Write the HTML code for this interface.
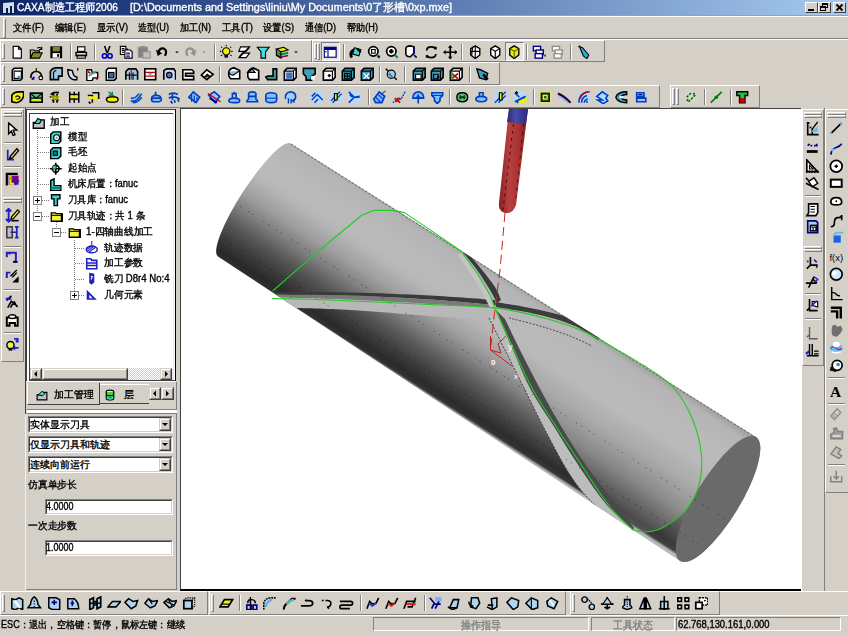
<!DOCTYPE html>
<html><head><meta charset="utf-8"><style>
html,body{margin:0;padding:0}
body{width:848px;height:636px;overflow:hidden;position:relative;background:#d4d0c8;font-family:"Liberation Sans", sans-serif;font-size:12px;color:#000}
div{-webkit-text-stroke:0.35px currentColor}
</style></head><body>
<div style="position:absolute;left:0px;top:0px;width:848px;height:15px;background:linear-gradient(to right,#0a246a 0%,#a6caf0 100%)"></div><div style="position:absolute;left:0px;top:15px;width:848px;height:1px;background:#a0a0a0"></div><svg style="position:absolute;left:2px;top:1px" width="13" height="13" viewBox="0 0 13 13"><rect x="0" y="0" width="13" height="13" fill="#0a1a40"/><path d="M1 2v10h3V7h2v5h2V5h2v7h2V1" fill="#c8e0f0"/></svg><div style="position:absolute;left:17px;top:1px;white-space:nowrap;transform-origin:0 0;transform:scaleX(0.9229);color:#fff;font-size:11px;line-height:13px">CAXA制造工程师2006</div><div style="position:absolute;left:130px;top:1px;white-space:nowrap;transform-origin:0 0;transform:scaleX(0.9882);color:#fff;font-size:11px;line-height:13px">[D:\Documents and Settings\liniu\My Documents\0了形槽\0xp.mxe]</div><div style="position:absolute;left:805px;top:2px;width:13px;height:11px;box-sizing:border-box;background:#d4d0c8;border-top:1px solid #fff;border-left:1px solid #fff;border-right:1px solid #404040;border-bottom:1px solid #404040"></div><div style="position:absolute;left:818px;top:2px;width:13px;height:11px;box-sizing:border-box;background:#d4d0c8;border-top:1px solid #fff;border-left:1px solid #fff;border-right:1px solid #404040;border-bottom:1px solid #404040"></div><div style="position:absolute;left:833px;top:2px;width:13px;height:11px;box-sizing:border-box;background:#d4d0c8;border-top:1px solid #fff;border-left:1px solid #fff;border-right:1px solid #404040;border-bottom:1px solid #404040"></div><svg style="position:absolute;left:805px;top:2px" width="13" height="11"><rect x="3" y="7" width="6" height="2" fill="#000"/></svg><svg style="position:absolute;left:818px;top:2px" width="13" height="11"><rect x="4.5" y="1.5" width="5" height="4" fill="none" stroke="#000"/><rect x="4" y="1" width="6" height="2" fill="#000"/><rect x="2.5" y="4.5" width="5" height="4" fill="#d4d0c8" stroke="#000"/><rect x="2" y="4" width="6" height="2" fill="#000"/></svg><svg style="position:absolute;left:833px;top:2px" width="13" height="11"><path d="M3.5 2.5l6 6M9.5 2.5l-6 6" stroke="#000" stroke-width="1.8"/></svg><div style="position:absolute;left:0px;top:16px;width:848px;height:1px;background:#fff"></div><div style="position:absolute;left:3px;top:18px;width:3px;height:20px;box-sizing:border-box;border-top:1px solid #fff;border-left:1px solid #fff;border-right:1px solid #808080;border-bottom:1px solid #808080"></div><div style="position:absolute;left:13px;top:22px;white-space:nowrap;transform-origin:0 0;transform:scaleX(0.9457);font-size:10px;line-height:12px">文件(F)</div><div style="position:absolute;left:55px;top:22px;white-space:nowrap;transform-origin:0 0;transform:scaleX(0.9297);font-size:10px;line-height:12px">编辑(E)</div><div style="position:absolute;left:97px;top:22px;white-space:nowrap;transform-origin:0 0;transform:scaleX(0.9297);font-size:10px;line-height:12px">显示(V)</div><div style="position:absolute;left:138px;top:22px;white-space:nowrap;transform-origin:0 0;transform:scaleX(0.9147);font-size:10px;line-height:12px">造型(U)</div><div style="position:absolute;left:180px;top:22px;white-space:nowrap;transform-origin:0 0;transform:scaleX(0.9147);font-size:10px;line-height:12px">加工(N)</div><div style="position:absolute;left:222px;top:22px;white-space:nowrap;transform-origin:0 0;transform:scaleX(0.9457);font-size:10px;line-height:12px">工具(T)</div><div style="position:absolute;left:263px;top:22px;white-space:nowrap;transform-origin:0 0;transform:scaleX(0.9297);font-size:10px;line-height:12px">设置(S)</div><div style="position:absolute;left:305px;top:22px;white-space:nowrap;transform-origin:0 0;transform:scaleX(0.9147);font-size:10px;line-height:12px">通信(D)</div><div style="position:absolute;left:347px;top:22px;white-space:nowrap;transform-origin:0 0;transform:scaleX(0.9147);font-size:10px;line-height:12px">帮助(H)</div><div style="position:absolute;left:0px;top:38px;width:848px;height:1px;background:#808080"></div><div style="position:absolute;left:0px;top:39px;width:848px;height:1px;background:#fff"></div><div style="position:absolute;left:0px;top:40px;width:312px;height:22px;box-sizing:border-box;border-top:1px solid #fff;border-left:1px solid #fff;border-right:1px solid #808080;border-bottom:1px solid #808080"></div><div style="position:absolute;left:2px;top:43px;width:3px;height:16px;box-sizing:border-box;border-top:1px solid #fff;border-left:1px solid #fff;border-right:1px solid #808080;border-bottom:1px solid #808080"></div><div style="position:absolute;left:312px;top:40px;width:293px;height:22px;box-sizing:border-box;border-top:1px solid #fff;border-left:1px solid #fff;border-right:1px solid #808080;border-bottom:1px solid #808080"></div><div style="position:absolute;left:314px;top:43px;width:3px;height:16px;box-sizing:border-box;border-top:1px solid #fff;border-left:1px solid #fff;border-right:1px solid #808080;border-bottom:1px solid #808080"></div><div style="position:absolute;left:317px;top:43px;width:3px;height:17px;box-sizing:border-box;border-top:1px solid #fff;border-left:1px solid #fff;border-right:1px solid #808080;border-bottom:1px solid #808080"></div><div style="position:absolute;left:0px;top:62px;width:500px;height:23px;box-sizing:border-box;border-top:1px solid #fff;border-left:1px solid #fff;border-right:1px solid #808080;border-bottom:1px solid #808080"></div><div style="position:absolute;left:2px;top:65px;width:3px;height:17px;box-sizing:border-box;border-top:1px solid #fff;border-left:1px solid #fff;border-right:1px solid #808080;border-bottom:1px solid #808080"></div><div style="position:absolute;left:0px;top:85px;width:660px;height:23px;box-sizing:border-box;border-top:1px solid #fff;border-left:1px solid #fff;border-right:1px solid #808080;border-bottom:1px solid #808080"></div><div style="position:absolute;left:2px;top:88px;width:3px;height:17px;box-sizing:border-box;border-top:1px solid #fff;border-left:1px solid #fff;border-right:1px solid #808080;border-bottom:1px solid #808080"></div><div style="position:absolute;left:670px;top:85px;width:90px;height:23px;box-sizing:border-box;border-top:1px solid #fff;border-left:1px solid #fff;border-right:1px solid #808080;border-bottom:1px solid #808080"></div><div style="position:absolute;left:672px;top:88px;width:3px;height:17px;box-sizing:border-box;border-top:1px solid #fff;border-left:1px solid #fff;border-right:1px solid #808080;border-bottom:1px solid #808080"></div><div style="position:absolute;left:676px;top:88px;width:3px;height:17px;box-sizing:border-box;border-top:1px solid #fff;border-left:1px solid #fff;border-right:1px solid #808080;border-bottom:1px solid #808080"></div><div style="position:absolute;left:25px;top:108px;width:1px;height:306px;background:#404040"></div><div style="position:absolute;left:25px;top:414px;width:1px;height:177px;background:#f0f0f0"></div><div style="position:absolute;left:1px;top:109px;width:23px;height:253px;box-sizing:border-box;border-top:1px solid #fff;border-left:1px solid #fff;border-right:1px solid #808080;border-bottom:1px solid #808080"></div><div style="position:absolute;left:3px;top:111px;width:19px;height:3px;box-sizing:border-box;border-top:1px solid #fff;border-left:1px solid #fff;border-right:1px solid #808080;border-bottom:1px solid #808080"></div><div style="position:absolute;left:3px;top:114px;width:19px;height:3px;box-sizing:border-box;border-top:1px solid #fff;border-left:1px solid #fff;border-right:1px solid #808080;border-bottom:1px solid #808080"></div><div style="position:absolute;left:4px;top:142px;width:17px;height:1px;background:#808080"></div><div style="position:absolute;left:4px;top:143px;width:17px;height:1px;background:#fff"></div><div style="position:absolute;left:4px;top:166px;width:17px;height:1px;background:#808080"></div><div style="position:absolute;left:4px;top:167px;width:17px;height:1px;background:#fff"></div><div style="position:absolute;left:3px;top:197px;width:19px;height:3px;box-sizing:border-box;border-top:1px solid #fff;border-left:1px solid #fff;border-right:1px solid #808080;border-bottom:1px solid #808080"></div><div style="position:absolute;left:3px;top:200px;width:19px;height:3px;box-sizing:border-box;border-top:1px solid #fff;border-left:1px solid #fff;border-right:1px solid #808080;border-bottom:1px solid #808080"></div><div style="position:absolute;left:4px;top:246px;width:17px;height:1px;background:#808080"></div><div style="position:absolute;left:4px;top:247px;width:17px;height:1px;background:#fff"></div><div style="position:absolute;left:4px;top:289px;width:17px;height:1px;background:#808080"></div><div style="position:absolute;left:4px;top:290px;width:17px;height:1px;background:#fff"></div><div style="position:absolute;left:4px;top:332px;width:17px;height:1px;background:#808080"></div><div style="position:absolute;left:4px;top:333px;width:17px;height:1px;background:#fff"></div><div style="position:absolute;left:26px;top:108px;width:154px;height:483px;background:#d4d0c8"></div><div style="position:absolute;left:176px;top:382px;width:1px;height:208px;background:#808080"></div><div style="position:absolute;left:26px;top:589px;width:151px;height:1px;background:#808080"></div><div style="position:absolute;left:26px;top:109px;width:150px;height:273px;background:#fff"></div><div style="position:absolute;left:26px;top:109px;width:150px;height:1px;background:#404040"></div><div style="position:absolute;left:26px;top:109px;width:1px;height:273px;background:#404040"></div><div style="position:absolute;left:175px;top:109px;width:1px;height:273px;background:#000"></div><div style="position:absolute;left:29px;top:113px;width:144px;height:1px;background:#404040"></div><div style="position:absolute;left:29px;top:113px;width:1px;height:268px;background:#404040"></div><div style="position:absolute;left:29px;top:380px;width:146px;height:1px;background:#404040"></div><div style="position:absolute;left:26px;top:381px;width:150px;height:1px;background:#fff"></div><div style="position:absolute;left:173px;top:113px;width:1px;height:267px;background:#e8e8e8"></div><div style="position:absolute;left:30px;top:368px;width:143px;height:12px;background:repeating-conic-gradient(#d4d0c8 0% 25%,#fff 0% 50%) 0 0/2px 2px"></div><div style="position:absolute;left:30px;top:368px;width:12px;height:12px;box-sizing:border-box;background:#d4d0c8;border-top:1px solid #d4d0c8;border-left:1px solid #d4d0c8;border-right:1px solid #404040;border-bottom:1px solid #404040;"></div><div style="position:absolute;left:31px;top:369px;width:10px;height:10px;box-sizing:border-box;border-top:1px solid #fff;border-left:1px solid #fff;border-right:1px solid #808080;border-bottom:1px solid #808080"></div><div style="position:absolute;left:42px;top:368px;width:86px;height:12px;box-sizing:border-box;background:#d4d0c8;border-top:1px solid #d4d0c8;border-left:1px solid #d4d0c8;border-right:1px solid #404040;border-bottom:1px solid #404040;"></div><div style="position:absolute;left:43px;top:369px;width:84px;height:10px;box-sizing:border-box;border-top:1px solid #fff;border-left:1px solid #fff;border-right:1px solid #808080;border-bottom:1px solid #808080"></div><div style="position:absolute;left:160px;top:368px;width:12px;height:12px;box-sizing:border-box;background:#d4d0c8;border-top:1px solid #d4d0c8;border-left:1px solid #d4d0c8;border-right:1px solid #404040;border-bottom:1px solid #404040;"></div><div style="position:absolute;left:161px;top:369px;width:10px;height:10px;box-sizing:border-box;border-top:1px solid #fff;border-left:1px solid #fff;border-right:1px solid #808080;border-bottom:1px solid #808080"></div><svg style="position:absolute;left:30px;top:368px" width="12" height="12"><path d="M4 6l3-3v6z" fill="#000"/></svg><svg style="position:absolute;left:160px;top:368px" width="12" height="12"><path d="M8 6L5 3v6z" fill="#000"/></svg><div style="position:absolute;left:99px;top:384px;width:50px;height:20px;box-sizing:border-box;border-top:1px solid #fff;border-bottom:1px solid #404040"></div><div style="position:absolute;left:27px;top:383px;width:73px;height:22px;box-sizing:border-box;background:#d4d0c8;border-left:1px solid #fff;border-right:1px solid #404040;border-bottom:1px solid #404040"></div><div style="position:absolute;left:54px;top:389px;white-space:nowrap;transform-origin:0 0;transform:scaleX(0.9900);font-size:10px;line-height:12px">加工管理</div><div style="position:absolute;left:123.5px;top:389px;white-space:nowrap;transform-origin:0 0;transform:scaleX(1.0000);font-size:10px;line-height:12px">层</div><div style="position:absolute;left:149px;top:387px;width:12px;height:13px;box-sizing:border-box;background:#d4d0c8;border-top:1px solid #d4d0c8;border-left:1px solid #d4d0c8;border-right:1px solid #404040;border-bottom:1px solid #404040;"></div><div style="position:absolute;left:150px;top:388px;width:10px;height:11px;box-sizing:border-box;border-top:1px solid #fff;border-left:1px solid #fff;border-right:1px solid #808080;border-bottom:1px solid #808080"></div><div style="position:absolute;left:161px;top:387px;width:13px;height:13px;box-sizing:border-box;background:#d4d0c8;border-top:1px solid #d4d0c8;border-left:1px solid #d4d0c8;border-right:1px solid #404040;border-bottom:1px solid #404040;"></div><div style="position:absolute;left:162px;top:388px;width:11px;height:11px;box-sizing:border-box;border-top:1px solid #fff;border-left:1px solid #fff;border-right:1px solid #808080;border-bottom:1px solid #808080"></div><svg style="position:absolute;left:149px;top:387px" width="12" height="13"><path d="M4 6.5l3-3v6z" fill="#000"/></svg><svg style="position:absolute;left:161px;top:387px" width="13" height="13"><path d="M8 6.5L5 3.5v6z" fill="#000"/></svg><div style="position:absolute;left:27px;top:409px;width:150px;height:1px;background:#808080"></div><div style="position:absolute;left:27px;top:410px;width:150px;height:3px;background:#fff"></div><div style="position:absolute;left:27px;top:413px;width:150px;height:1px;background:#808080"></div><div style="position:absolute;left:28px;top:416px;width:145px;height:17px;box-sizing:border-box;background:#fff;border-top:1px solid #808080;border-left:1px solid #808080;border-right:1px solid #fff;border-bottom:1px solid #fff"></div><div style="position:absolute;left:29px;top:417px;width:143px;height:15px;box-sizing:border-box;border-top:1px solid #404040;border-left:1px solid #404040;border-right:1px solid #d4d0c8;border-bottom:1px solid #d4d0c8"></div><div style="position:absolute;left:159px;top:418px;width:12px;height:13px;box-sizing:border-box;background:#d4d0c8;border-top:1px solid #d4d0c8;border-left:1px solid #d4d0c8;border-right:1px solid #404040;border-bottom:1px solid #404040;"></div><div style="position:absolute;left:160px;top:419px;width:10px;height:11px;box-sizing:border-box;border-top:1px solid #fff;border-left:1px solid #fff;border-right:1px solid #808080;border-bottom:1px solid #808080"></div><svg style="position:absolute;left:159px;top:418px" width="12" height="13"><path d="M3 5h6l-3 3z" fill="#000"/></svg><div style="position:absolute;left:30px;top:419px;white-space:nowrap;transform-origin:0 0;transform:scaleX(0.9917);font-size:10px;line-height:12px">实体显示刀具</div><div style="position:absolute;left:28px;top:436px;width:145px;height:17px;box-sizing:border-box;background:#fff;border-top:1px solid #808080;border-left:1px solid #808080;border-right:1px solid #fff;border-bottom:1px solid #fff"></div><div style="position:absolute;left:29px;top:437px;width:143px;height:15px;box-sizing:border-box;border-top:1px solid #404040;border-left:1px solid #404040;border-right:1px solid #d4d0c8;border-bottom:1px solid #d4d0c8"></div><div style="position:absolute;left:159px;top:438px;width:12px;height:13px;box-sizing:border-box;background:#d4d0c8;border-top:1px solid #d4d0c8;border-left:1px solid #d4d0c8;border-right:1px solid #404040;border-bottom:1px solid #404040;"></div><div style="position:absolute;left:160px;top:439px;width:10px;height:11px;box-sizing:border-box;border-top:1px solid #fff;border-left:1px solid #fff;border-right:1px solid #808080;border-bottom:1px solid #808080"></div><svg style="position:absolute;left:159px;top:438px" width="12" height="13"><path d="M3 5h6l-3 3z" fill="#000"/></svg><div style="position:absolute;left:30px;top:439px;white-space:nowrap;transform-origin:0 0;transform:scaleX(1.0000);font-size:10px;line-height:12px">仅显示刀具和轨迹</div><div style="position:absolute;left:28px;top:456px;width:145px;height:17px;box-sizing:border-box;background:#fff;border-top:1px solid #808080;border-left:1px solid #808080;border-right:1px solid #fff;border-bottom:1px solid #fff"></div><div style="position:absolute;left:29px;top:457px;width:143px;height:15px;box-sizing:border-box;border-top:1px solid #404040;border-left:1px solid #404040;border-right:1px solid #d4d0c8;border-bottom:1px solid #d4d0c8"></div><div style="position:absolute;left:159px;top:458px;width:12px;height:13px;box-sizing:border-box;background:#d4d0c8;border-top:1px solid #d4d0c8;border-left:1px solid #d4d0c8;border-right:1px solid #404040;border-bottom:1px solid #404040;"></div><div style="position:absolute;left:160px;top:459px;width:10px;height:11px;box-sizing:border-box;border-top:1px solid #fff;border-left:1px solid #fff;border-right:1px solid #808080;border-bottom:1px solid #808080"></div><svg style="position:absolute;left:159px;top:458px" width="12" height="13"><path d="M3 5h6l-3 3z" fill="#000"/></svg><div style="position:absolute;left:30px;top:459px;white-space:nowrap;transform-origin:0 0;transform:scaleX(1.0000);font-size:10px;line-height:12px">连续向前运行</div><div style="position:absolute;left:28px;top:479px;white-space:nowrap;transform-origin:0 0;transform:scaleX(0.9800);font-size:10px;line-height:12px">仿真单步长</div><div style="position:absolute;left:28px;top:520px;white-space:nowrap;transform-origin:0 0;transform:scaleX(0.9800);font-size:10px;line-height:12px">一次走步数</div><div style="position:absolute;left:45px;top:499px;width:128px;height:16px;box-sizing:border-box;background:#fff;border-top:1px solid #808080;border-left:1px solid #808080;border-right:1px solid #fff;border-bottom:1px solid #fff"></div><div style="position:absolute;left:46px;top:500px;width:126px;height:14px;box-sizing:border-box;border-top:1px solid #404040;border-left:1px solid #404040;border-right:1px solid #d4d0c8;border-bottom:1px solid #d4d0c8"></div><div style="position:absolute;left:46px;top:501px;white-space:nowrap;transform-origin:0 0;transform:scaleX(0.8989);font-size:10px;line-height:12px">4.0000</div><div style="position:absolute;left:45px;top:540px;width:128px;height:16px;box-sizing:border-box;background:#fff;border-top:1px solid #808080;border-left:1px solid #808080;border-right:1px solid #fff;border-bottom:1px solid #fff"></div><div style="position:absolute;left:46px;top:541px;width:126px;height:14px;box-sizing:border-box;border-top:1px solid #404040;border-left:1px solid #404040;border-right:1px solid #d4d0c8;border-bottom:1px solid #d4d0c8"></div><div style="position:absolute;left:46px;top:542px;white-space:nowrap;transform-origin:0 0;transform:scaleX(0.8989);font-size:10px;line-height:12px">1.0000</div><div style="position:absolute;left:180px;top:108px;width:621px;height:483px;box-sizing:border-box;background:#fff;border-top:1px solid #404040;border-left:1px solid #404040;border-bottom:2px solid #000"></div><div style="position:absolute;left:801px;top:108px;width:1px;height:483px;background:#fff"></div><div style="position:absolute;left:802px;top:109px;width:22px;height:257px;box-sizing:border-box;border-top:1px solid #fff;border-left:1px solid #fff;border-right:1px solid #808080;border-bottom:1px solid #808080"></div><div style="position:absolute;left:824px;top:108px;width:1px;height:483px;background:#808080"></div><div style="position:absolute;left:825px;top:109px;width:23px;height:384px;box-sizing:border-box;border-top:1px solid #fff;border-left:1px solid #fff;border-bottom:1px solid #808080"></div><div style="position:absolute;left:804px;top:112px;width:18px;height:3px;box-sizing:border-box;border-top:1px solid #fff;border-left:1px solid #fff;border-right:1px solid #808080;border-bottom:1px solid #808080"></div><div style="position:absolute;left:804px;top:115px;width:18px;height:3px;box-sizing:border-box;border-top:1px solid #fff;border-left:1px solid #fff;border-right:1px solid #808080;border-bottom:1px solid #808080"></div><div style="position:absolute;left:827px;top:112px;width:19px;height:3px;box-sizing:border-box;border-top:1px solid #fff;border-left:1px solid #fff;border-right:1px solid #808080;border-bottom:1px solid #808080"></div><div style="position:absolute;left:827px;top:115px;width:19px;height:3px;box-sizing:border-box;border-top:1px solid #fff;border-left:1px solid #fff;border-right:1px solid #808080;border-bottom:1px solid #808080"></div><div style="position:absolute;left:804px;top:246px;width:18px;height:3px;box-sizing:border-box;border-top:1px solid #fff;border-left:1px solid #fff;border-right:1px solid #808080;border-bottom:1px solid #808080"></div><div style="position:absolute;left:804px;top:249px;width:18px;height:3px;box-sizing:border-box;border-top:1px solid #fff;border-left:1px solid #fff;border-right:1px solid #808080;border-bottom:1px solid #808080"></div><div style="position:absolute;left:805px;top:195px;width:16px;height:1px;background:#808080"></div><div style="position:absolute;left:805px;top:196px;width:16px;height:1px;background:#fff"></div><div style="position:absolute;left:805px;top:293px;width:16px;height:1px;background:#808080"></div><div style="position:absolute;left:805px;top:294px;width:16px;height:1px;background:#fff"></div><div style="position:absolute;left:805px;top:318px;width:16px;height:1px;background:#808080"></div><div style="position:absolute;left:805px;top:319px;width:16px;height:1px;background:#fff"></div><div style="position:absolute;left:828px;top:377px;width:17px;height:1px;background:#808080"></div><div style="position:absolute;left:828px;top:378px;width:17px;height:1px;background:#fff"></div><div style="position:absolute;left:828px;top:403px;width:17px;height:1px;background:#808080"></div><div style="position:absolute;left:828px;top:404px;width:17px;height:1px;background:#fff"></div><div style="position:absolute;left:828px;top:464px;width:17px;height:1px;background:#808080"></div><div style="position:absolute;left:828px;top:465px;width:17px;height:1px;background:#fff"></div><div style="position:absolute;left:0px;top:591px;width:848px;height:1px;background:#fff"></div><div style="position:absolute;left:0px;top:591px;width:208px;height:24px;box-sizing:border-box;border-top:1px solid #fff;border-left:1px solid #fff;border-right:1px solid #808080;border-bottom:1px solid #808080"></div><div style="position:absolute;left:209px;top:591px;width:357px;height:24px;box-sizing:border-box;border-top:1px solid #fff;border-left:1px solid #fff;border-right:1px solid #808080;border-bottom:1px solid #808080"></div><div style="position:absolute;left:2px;top:594px;width:3px;height:18px;box-sizing:border-box;border-top:1px solid #fff;border-left:1px solid #fff;border-right:1px solid #808080;border-bottom:1px solid #808080"></div><div style="position:absolute;left:570px;top:591px;width:150px;height:24px;box-sizing:border-box;border-top:1px solid #fff;border-left:1px solid #fff;border-right:1px solid #808080;border-bottom:1px solid #808080"></div><div style="position:absolute;left:572px;top:594px;width:3px;height:18px;box-sizing:border-box;border-top:1px solid #fff;border-left:1px solid #fff;border-right:1px solid #808080;border-bottom:1px solid #808080"></div><div style="position:absolute;left:0px;top:615px;width:848px;height:1px;background:#fff"></div><div style="position:absolute;left:1px;top:619px;white-space:nowrap;transform-origin:0 0;transform:scaleX(0.9174);font-size:10px;line-height:12px">ESC：退出，空格键：暂停，鼠标左键：继续</div><div style="position:absolute;left:373px;top:617px;width:216px;height:14px;box-sizing:border-box;border-top:1px solid #808080;border-left:1px solid #808080;border-right:1px solid #fff;border-bottom:1px solid #fff"></div><div style="position:absolute;left:461px;top:619px;white-space:nowrap;transform-origin:0 0;transform:scaleX(0.9091);font-size:11px;line-height:12px;color:#808080">操作指导</div><div style="position:absolute;left:591px;top:617px;width:84px;height:14px;box-sizing:border-box;border-top:1px solid #808080;border-left:1px solid #808080;border-right:1px solid #fff;border-bottom:1px solid #fff"></div><div style="position:absolute;left:613px;top:619px;white-space:nowrap;transform-origin:0 0;transform:scaleX(0.9091);font-size:11px;line-height:12px;color:#808080">工具状态</div><div style="position:absolute;left:676px;top:617px;width:165px;height:14px;box-sizing:border-box;border-top:1px solid #808080;border-left:1px solid #808080;border-right:1px solid #fff;border-bottom:1px solid #fff"></div><div style="position:absolute;left:678px;top:619px;white-space:nowrap;transform-origin:0 0;transform:scaleX(0.9411);font-size:10px;line-height:12px">62.768,130.161,0.000</div><div style="position:absolute;left:321px;top:42px;width:19px;height:19px;box-sizing:border-box;background:#e6e4de;border-top:1px solid #808080;border-left:1px solid #808080;border-right:1px solid #fff;border-bottom:1px solid #fff"></div><div style="position:absolute;left:505px;top:42px;width:19px;height:19px;box-sizing:border-box;background:#e6e4de;border-top:1px solid #808080;border-left:1px solid #808080;border-right:1px solid #fff;border-bottom:1px solid #fff"></div><svg style="position:absolute;left:9.8px;top:44.8px" width="14.5" height="14.5" viewBox="0 0 16 16"><g stroke-width="1.25" fill="none"><path d="M3.5 1.5h6l3 3v10h-9z" fill="#fff" stroke="#000"/><path d="M9.5 1.5v3h3" fill="none" stroke="#000"/></g></svg><svg style="position:absolute;left:28.5px;top:44.8px" width="14.5" height="14.5" viewBox="0 0 16 16"><g stroke-width="1.25" fill="none"><path d="M1.5 5.5h4l1 1h5v2h-7l-3 6z" fill="#c8c060" stroke="#000"/><path d="M1.5 14.5l3-6h10l-3 6z" fill="#8a8a20" stroke="#000"/><path d="M9 3.5q3-2 5 1" fill="none" stroke="#000"/><path d="M14 2v3h-3" fill="none" stroke="#000"/></g></svg><svg style="position:absolute;left:48.5px;top:44.8px" width="14.5" height="14.5" viewBox="0 0 16 16"><g stroke-width="1.25" fill="none"><rect x="1.5" y="1.5" width="13" height="13" fill="#000"/><rect x="4" y="2" width="8" height="5" fill="#808040"/><rect x="4" y="9" width="8" height="5" fill="#fff"/><rect x="9" y="10" width="2" height="3" fill="#000"/></g></svg><svg style="position:absolute;left:73.8px;top:44.8px" width="14.5" height="14.5" viewBox="0 0 16 16"><g stroke-width="1.25" fill="none"><rect x="4" y="2" width="8" height="5" fill="#fff" stroke="#000"/><path d="M1.5 7.5h13v5h-13z" fill="#000"/><rect x="3" y="9" width="10" height="1.5" fill="#fff"/><rect x="3.5" y="12" width="9" height="2.5" fill="#fff" stroke="#000"/></g></svg><svg style="position:absolute;left:99.5px;top:44.8px" width="14.5" height="14.5" viewBox="0 0 16 16"><g stroke-width="1.25" fill="none"><path d="M5 1l3 8M11 1L8 9" stroke="#000" stroke-width="1.68"/><circle cx="5" cy="12" r="2.4" fill="none" stroke="#0000c0" stroke-width="1.80"/><circle cx="11" cy="12" r="2.4" fill="none" stroke="#0000c0" stroke-width="1.80"/></g></svg><svg style="position:absolute;left:118.5px;top:44.8px" width="14.5" height="14.5" viewBox="0 0 16 16"><g stroke-width="1.25" fill="none"><path d="M1.5 1.5h6v3h2v6h-8z" fill="#fff" stroke="#000"/><path d="M3 4h3M3 6h3M3 8h3" stroke="#000"/><path d="M6.5 5.5h6l2 2v7h-8z" fill="#fff" stroke="#000"/><path d="M8 9h4M8 11h4M8 13h4" stroke="#000080"/></g></svg><svg style="position:absolute;left:137.2px;top:44.8px" width="14.5" height="14.5" viewBox="0 0 16 16"><g stroke-width="1.25" fill="none"><rect x="1.5" y="2.5" width="10" height="11" fill="#808080" stroke="#909090"/><rect x="6.5" y="7.5" width="8" height="7" fill="#c0c0c0" stroke="#909090"/><rect x="4" y="1" width="5" height="3" fill="#909090"/></g></svg><svg style="position:absolute;left:154.8px;top:44.8px" width="14.5" height="14.5" viewBox="0 0 16 16"><g stroke-width="1.25" fill="none"><path d="M4 8q1-5 6-4q4 2 1 8" fill="none" stroke="#000" stroke-width="2.40"/><path d="M1 5l2 7l5-3z" fill="#000"/></g></svg><svg style="position:absolute;left:183.3px;top:44.8px" width="14.5" height="14.5" viewBox="0 0 16 16"><g stroke-width="1.25" fill="none"><path d="M12 8q-1-5-6-4q-4 2-1 8" fill="none" stroke="#909090" stroke-width="2.40"/><path d="M15 5l-2 7l-5-3z" fill="#909090"/></g></svg><svg style="position:absolute;left:219.2px;top:44.8px" width="14.5" height="14.5" viewBox="0 0 16 16"><g stroke-width="1.25" fill="none"><circle cx="8" cy="7" r="4" fill="#f0f000" stroke="#000"/><rect x="6" y="11" width="4" height="3" fill="#000080"/><path d="M8 0v1.5M1 7h1.5M13.5 7H15M2.5 2l1 1M13.5 2l-1 1M2 12l1.5-1M14 12l-1.5-1" stroke="#000"/></g></svg><svg style="position:absolute;left:237.2px;top:44.8px" width="14.5" height="14.5" viewBox="0 0 16 16"><g stroke-width="1.25" fill="none"><path d="M4 2h10l-4 5h-8z" fill="#fff" stroke="#000"/><path d="M6 9h8l-4 5h-8z" fill="#fff" stroke="#000"/><path d="M13 3l-10 10" stroke="#000" stroke-width="1.80"/></g></svg><svg style="position:absolute;left:256.1px;top:44.8px" width="14.5" height="14.5" viewBox="0 0 16 16"><g stroke-width="1.25" fill="none"><path d="M1.5 2.5h13l-4 5v7h-5v-7z" fill="#40e0e0" stroke="#000"/></g></svg><svg style="position:absolute;left:274.8px;top:44.8px" width="14.5" height="14.5" viewBox="0 0 16 16"><g stroke-width="1.25" fill="none"><path d="M1.5 4.5l8-2 5 3-8 2z" fill="#f0f000" stroke="#000"/><path d="M1.5 7.5l5 3 8-2" fill="none" stroke="#00a000" stroke-width="2.40"/><path d="M1.5 10.5l5 3 8-2" fill="none" stroke="#800080" stroke-width="1.80"/><path d="M1.5 4.5v7l5 3v-7" fill="none" stroke="#000"/></g></svg><svg style="position:absolute;left:348.6px;top:44.8px" width="14.5" height="14.5" viewBox="0 0 16 16"><g stroke-width="1.25" fill="none"><path d="M3 14q-3-6 3-9" fill="none" stroke="#000" stroke-width="3.00"/><path d="M6 3l7 2l-2 7l-7-2z" fill="#40d0d0" stroke="#000"/><path d="M9 4l4 4" stroke="#000" stroke-width="2.40"/></g></svg><svg style="position:absolute;left:367.1px;top:44.8px" width="14.5" height="14.5" viewBox="0 0 16 16"><g stroke-width="1.25" fill="none"><circle cx="7" cy="7" r="5.2" fill="#fff" stroke="#000" stroke-width="1.92"/><rect x="5" y="5" width="4" height="4" fill="none" stroke="#000"/><path d="M11 11l3 3" stroke="#008080" stroke-width="2.40"/><path d="M12 14l2-2" stroke="#000080" stroke-width="1.80"/></g></svg><svg style="position:absolute;left:385.2px;top:44.8px" width="14.5" height="14.5" viewBox="0 0 16 16"><g stroke-width="1.25" fill="none"><circle cx="7" cy="7" r="5.2" fill="#fff" stroke="#000" stroke-width="1.92"/><path d="M4.5 7h5M7 4.5v5" stroke="#000" stroke-width="2.40"/><path d="M11 11l3 3" stroke="#008080" stroke-width="2.40"/></g></svg><svg style="position:absolute;left:404.1px;top:44.8px" width="14.5" height="14.5" viewBox="0 0 16 16"><g stroke-width="1.25" fill="none"><path d="M2 4q0-3 5-3l4 1v7l-4 4q-6 0-5-5z" fill="#fff" stroke="#000" stroke-width="1.80"/><path d="M11 2v8M11 11l3 3" stroke="#000080" stroke-width="1.80"/></g></svg><svg style="position:absolute;left:423.8px;top:44.8px" width="14.5" height="14.5" viewBox="0 0 16 16"><g stroke-width="1.25" fill="none"><path d="M3 6q0-4 5-4q4 0 5 3M13 10q0 4-5 4q-4 0-5-3" fill="none" stroke="#000" stroke-width="1.92"/><path d="M11 2h3v3zM5 14H2v-3z" fill="#000"/></g></svg><svg style="position:absolute;left:442.9px;top:44.8px" width="14.5" height="14.5" viewBox="0 0 16 16"><g stroke-width="1.25" fill="none"><path d="M8 1v14M1 8h14" stroke="#000" stroke-width="1.92"/><path d="M8 0l-2.5 3h5zM8 16l-2.5-3h5zM0 8l3-2.5v5zM16 8l-3-2.5v5z" fill="#000"/></g></svg><svg style="position:absolute;left:468.2px;top:44.8px" width="14.5" height="14.5" viewBox="0 0 16 16"><g stroke-width="1.25" fill="none"><path d="M3 4l5-3l5 3v7l-5 4l-5-4z" fill="#fff" stroke="#000" stroke-width="1.56"/><path d="M3 7h10M8 1v14M5 3l-1 9" stroke="#000"/></g></svg><svg style="position:absolute;left:487.8px;top:44.8px" width="14.5" height="14.5" viewBox="0 0 16 16"><g stroke-width="1.25" fill="none"><path d="M3 4l5-3l5 3v7l-5 4l-5-4z" fill="#fff" stroke="#000" stroke-width="1.56"/><path d="M3 4l5 3l5-3M8 7v8" stroke="#000"/></g></svg><svg style="position:absolute;left:531.6px;top:44.8px" width="14.5" height="14.5" viewBox="0 0 16 16"><g stroke-width="1.25" fill="none"><rect x="1.5" y="1.5" width="8" height="5" fill="#fff" stroke="#000080" stroke-width="1.56"/><rect x="4.5" y="5.5" width="8" height="5" fill="#fff" stroke="#000080" stroke-width="1.56"/><rect x="3.5" y="9.5" width="8" height="5" fill="#fff" stroke="#000080" stroke-width="1.56"/><path d="M13 12l2-2v3z" fill="#000080"/></g></svg><svg style="position:absolute;left:551.2px;top:44.8px" width="14.5" height="14.5" viewBox="0 0 16 16"><g stroke-width="1.25" fill="none"><rect x="1.5" y="1.5" width="8" height="5" fill="#fff" stroke="#909090" stroke-width="1.56"/><rect x="4.5" y="5.5" width="8" height="5" fill="#fff" stroke="#909090" stroke-width="1.56"/><rect x="3.5" y="9.5" width="8" height="5" fill="#fff" stroke="#909090" stroke-width="1.56"/></g></svg><svg style="position:absolute;left:576.5px;top:44.8px" width="14.5" height="14.5" viewBox="0 0 16 16"><g stroke-width="1.25" fill="none"><path d="M3 2l3 1l7 8l-2 4l-4-3l-3-7z" fill="#20b0e0" stroke="#000" stroke-width="1.20"/><path d="M3 2l-1-1" stroke="#000" stroke-width="2.40"/></g></svg><svg style="position:absolute;left:322.9px;top:44.8px" width="14.5" height="14.5" viewBox="0 0 16 16"><g stroke-width="1.25" fill="none"><rect x="1.5" y="2.5" width="13" height="11" fill="#fff" stroke="#000080"/><rect x="1.5" y="2.5" width="13" height="3" fill="#000080"/><path d="M5.5 5.5v8" stroke="#000080"/><rect x="2" y="7" width="2" height="1" fill="#000080"/></g></svg><svg style="position:absolute;left:507.0px;top:44.8px" width="14.5" height="14.5" viewBox="0 0 16 16"><g stroke-width="1.25" fill="none"><path d="M3 4l5-3l5 3v7l-5 4l-5-4z" fill="#f0f000" stroke="#000" stroke-width="1.56"/><path d="M3 4l5 3l5-3M8 7v8" stroke="#606000"/></g></svg><svg style="position:absolute;left:171.6px;top:47.0px" width="10" height="10" viewBox="0 0 16 16"><g stroke-width="1.25" fill="none"><path d="M5 7h6l-3 3z" fill="#000"/></g></svg><svg style="position:absolute;left:198.8px;top:47.0px" width="10" height="10" viewBox="0 0 16 16"><g stroke-width="1.25" fill="none"><path d="M5 7h6l-3 3z" fill="#909090"/></g></svg><svg style="position:absolute;left:291.0px;top:47.0px" width="10" height="10" viewBox="0 0 16 16"><g stroke-width="1.25" fill="none"><path d="M5 7h6l-3 3z" fill="#000"/></g></svg><div style="position:absolute;left:70px;top:44px;width:1px;height:16px;background:#808080"></div><div style="position:absolute;left:71px;top:44px;width:1px;height:16px;background:#fff"></div><div style="position:absolute;left:94px;top:44px;width:1px;height:16px;background:#808080"></div><div style="position:absolute;left:95px;top:44px;width:1px;height:16px;background:#fff"></div><div style="position:absolute;left:214px;top:44px;width:1px;height:16px;background:#808080"></div><div style="position:absolute;left:215px;top:44px;width:1px;height:16px;background:#fff"></div><div style="position:absolute;left:343px;top:44px;width:1px;height:16px;background:#808080"></div><div style="position:absolute;left:344px;top:44px;width:1px;height:16px;background:#fff"></div><div style="position:absolute;left:461px;top:44px;width:1px;height:16px;background:#808080"></div><div style="position:absolute;left:462px;top:44px;width:1px;height:16px;background:#fff"></div><div style="position:absolute;left:526px;top:44px;width:1px;height:16px;background:#808080"></div><div style="position:absolute;left:527px;top:44px;width:1px;height:16px;background:#fff"></div><div style="position:absolute;left:570px;top:44px;width:1px;height:16px;background:#808080"></div><div style="position:absolute;left:571px;top:44px;width:1px;height:16px;background:#fff"></div><svg style="position:absolute;left:9.8px;top:66.8px" width="14.5" height="14.5" viewBox="0 0 16 16"><g stroke-width="1.25" fill="none"><path d="M2.5 3.5l2-2h9v11l-2 2h-9z" fill="#fff" stroke="#000" stroke-width="1.68"/><path d="M4.5 4.5h8v8h-8z" fill="#fff" stroke="#000"/><path d="M9 10l3 3" stroke="#40a0a0" stroke-width="2.40"/></g></svg><svg style="position:absolute;left:28.5px;top:66.8px" width="14.5" height="14.5" viewBox="0 0 16 16"><g stroke-width="1.25" fill="none"><path d="M8 1v4" stroke="#000"/><path d="M2 12q0-7 6-7q6 0 6 7" fill="none" stroke="#000" stroke-width="1.80"/><circle cx="13" cy="12" r="2" fill="#fff" stroke="#000"/><path d="M3 14l3-3M5 14v-3" stroke="#0000c0" stroke-width="1.80"/></g></svg><svg style="position:absolute;left:48.5px;top:66.8px" width="14.5" height="14.5" viewBox="0 0 16 16"><g stroke-width="1.25" fill="none"><path d="M1.5 14V5q2-4 7-4h6v9h-4v4z" fill="#a0c8e0" stroke="#000" stroke-width="1.80"/><path d="M5 14V6q1-2 3-2" fill="none" stroke="#000"/></g></svg><svg style="position:absolute;left:66.3px;top:66.8px" width="14.5" height="14.5" viewBox="0 0 16 16"><g stroke-width="1.25" fill="none"><path d="M2 3q0 9 6 11h4v-3q-4 0-5-7z" fill="#d0e0f0" stroke="#000" stroke-width="1.56"/><path d="M13 1v3" stroke="#000"/></g></svg><svg style="position:absolute;left:85.2px;top:66.8px" width="14.5" height="14.5" viewBox="0 0 16 16"><g stroke-width="1.25" fill="none"><path d="M2 3h5l1 3h6v6h-5l-1 3h-6z" fill="#fff" stroke="#000" stroke-width="1.56"/><path d="M3 5l3 2M12 12l2 2" stroke="#c00000" stroke-width="1.80"/><path d="M4 10l8-5" stroke="#40a0a0" stroke-width="1.80"/></g></svg><svg style="position:absolute;left:104.0px;top:66.8px" width="14.5" height="14.5" viewBox="0 0 16 16"><g stroke-width="1.25" fill="none"><path d="M2.5 3.5l2-2h9v11l-2 2h-9z" fill="#fff" stroke="#000" stroke-width="1.68"/><rect x="5" y="6" width="6" height="6" fill="#4060c0" stroke="#000"/></g></svg><svg style="position:absolute;left:124.1px;top:66.8px" width="14.5" height="14.5" viewBox="0 0 16 16"><g stroke-width="1.25" fill="none"><path d="M2 14V5l3-3h8l2 3v9" fill="#a0c8e0" stroke="#000" stroke-width="1.80"/><path d="M6 14V6M10 14V6M2 9h12" stroke="#000"/><path d="M8 2v12" stroke="#c00000"/></g></svg><svg style="position:absolute;left:142.9px;top:66.8px" width="14.5" height="14.5" viewBox="0 0 16 16"><g stroke-width="1.25" fill="none"><rect x="2" y="2" width="12" height="12" fill="#fff" stroke="#000" stroke-width="1.80"/><path d="M2 6h12M2 10h12" stroke="#c00000"/><path d="M5 7h6l-3 2z" fill="#40a0a0"/></g></svg><svg style="position:absolute;left:161.8px;top:66.8px" width="14.5" height="14.5" viewBox="0 0 16 16"><g stroke-width="1.25" fill="none"><path d="M2 14V4l3-2h8l2 3v9" fill="#c8d8f0" stroke="#000" stroke-width="1.80"/><circle cx="8" cy="9" r="3" fill="#6070c0" stroke="#000"/></g></svg><svg style="position:absolute;left:180.8px;top:66.8px" width="14.5" height="14.5" viewBox="0 0 16 16"><g stroke-width="1.25" fill="none"><path d="M2 3h10l2 2v2H5v3h9v4H2z" fill="#fff" stroke="#000" stroke-width="1.80"/></g></svg><svg style="position:absolute;left:200.2px;top:66.8px" width="14.5" height="14.5" viewBox="0 0 16 16"><g stroke-width="1.25" fill="none"><path d="M1.5 9l6-6l7 5l-7 6z" fill="#fff" stroke="#000" stroke-width="1.80"/><path d="M4 12l4-4l4 3" fill="#303030" stroke="#000"/></g></svg><svg style="position:absolute;left:227.4px;top:66.8px" width="14.5" height="14.5" viewBox="0 0 16 16"><g stroke-width="1.25" fill="none"><path d="M2 5q2-4 6-4l6 3v9h-10l-2-3z" fill="#fff" stroke="#000" stroke-width="1.80"/><path d="M2 5q1 4 5 4l7-5" fill="#80c0e0" stroke="#000"/></g></svg><svg style="position:absolute;left:245.6px;top:66.8px" width="14.5" height="14.5" viewBox="0 0 16 16"><g stroke-width="1.25" fill="none"><path d="M2 6q2-4 6-5l6 3v10h-10l-2-3z" fill="#fff" stroke="#000" stroke-width="1.80"/><path d="M2 6l5-4l3 4z" fill="#80c0e0" stroke="#000"/></g></svg><svg style="position:absolute;left:263.8px;top:66.8px" width="14.5" height="14.5" viewBox="0 0 16 16"><g stroke-width="1.25" fill="none"><path d="M2 11l2 3h10V2h-4v8H4z" fill="#40a0a0" stroke="#000" stroke-width="1.80"/></g></svg><svg style="position:absolute;left:282.8px;top:66.8px" width="14.5" height="14.5" viewBox="0 0 16 16"><g stroke-width="1.25" fill="none"><path d="M1.5 4.5l3-3h10v10l-3 3h-10z" fill="#fff" stroke="#000" stroke-width="1.80"/><path d="M1.5 4.5h10v10M11.5 4.5l3-3" fill="none" stroke="#000"/><rect x="3.5" y="6" width="7" height="7" fill="#4070c0"/></g></svg><svg style="position:absolute;left:302.1px;top:66.8px" width="14.5" height="14.5" viewBox="0 0 16 16"><g stroke-width="1.25" fill="none"><path d="M1.5 1.5h13v6l-4 3v4h-6v-4l-3-3z" fill="#40a0c0" stroke="#000" stroke-width="1.80"/><rect x="10" y="10" width="4" height="4" fill="#fff"/></g></svg><svg style="position:absolute;left:322.1px;top:66.8px" width="14.5" height="14.5" viewBox="0 0 16 16"><g stroke-width="1.25" fill="none"><path d="M1.5 4.5l3-3h10v10l-3 3h-10z" fill="#fff" stroke="#000" stroke-width="1.80"/><path d="M1.5 4.5h10v10M11.5 4.5l3-3" fill="none" stroke="#000"/><path d="M6 9.5l2-2l2 2l-2 2z" fill="#000"/></g></svg><svg style="position:absolute;left:341.1px;top:66.8px" width="14.5" height="14.5" viewBox="0 0 16 16"><g stroke-width="1.25" fill="none"><path d="M1.5 4.5l3-3h10v10l-3 3h-10z" fill="#40a0c0" stroke="#000" stroke-width="1.80"/><path d="M1.5 4.5h10v10M11.5 4.5l3-3" fill="none" stroke="#000"/><path d="M4 7h6v6h-6zM7 7v6M4 10h6" stroke="#000" fill="none"/></g></svg><svg style="position:absolute;left:359.9px;top:66.8px" width="14.5" height="14.5" viewBox="0 0 16 16"><g stroke-width="1.25" fill="none"><path d="M1.5 4.5l3-3h10v10l-3 3h-10z" fill="#40a0c0" stroke="#000" stroke-width="1.80"/><path d="M1.5 4.5h10v10M11.5 4.5l3-3" fill="none" stroke="#000"/><path d="M4 7l6 6M10 7l-6 6" stroke="#fff" stroke-width="1.44"/></g></svg><svg style="position:absolute;left:384.4px;top:66.8px" width="14.5" height="14.5" viewBox="0 0 16 16"><g stroke-width="1.25" fill="none"><path d="M2 2l12 12" stroke="#000" stroke-width="1.68"/><circle cx="8" cy="8" r="4.5" fill="#a0d0e0" stroke="#000"/><path d="M5 7l4 4" stroke="#4080a0" stroke-width="2.40"/></g></svg><svg style="position:absolute;left:411.6px;top:66.8px" width="14.5" height="14.5" viewBox="0 0 16 16"><g stroke-width="1.25" fill="none"><path d="M1.5 4.5l3-3h10v10l-3 3h-10z" fill="#40a0c0" stroke="#000" stroke-width="1.80"/><path d="M1.5 4.5h10v10M11.5 4.5l3-3" fill="none" stroke="#000"/><path d="M4 8h6v5h-6z" fill="#fff" stroke="#000"/></g></svg><svg style="position:absolute;left:430.4px;top:66.8px" width="14.5" height="14.5" viewBox="0 0 16 16"><g stroke-width="1.25" fill="none"><path d="M1.5 4.5l3-3h10v10l-3 3h-10z" fill="#40a0c0" stroke="#000" stroke-width="1.80"/><path d="M1.5 4.5h10v10M11.5 4.5l3-3" fill="none" stroke="#000"/><path d="M4 8h5v5h-5z" fill="#40a0c0" stroke="#000"/><path d="M8 9l3 2l-3 2z" fill="#000"/></g></svg><svg style="position:absolute;left:449.4px;top:66.8px" width="14.5" height="14.5" viewBox="0 0 16 16"><g stroke-width="1.25" fill="none"><path d="M1.5 4.5l3-3h10v10l-3 3h-10z" fill="#fff" stroke="#000" stroke-width="1.80"/><path d="M1.5 4.5h10v10M11.5 4.5l3-3" fill="none" stroke="#000"/><path d="M3 7l7 6M3 13l7-6" stroke="#c00000" stroke-width="1.80"/><rect x="2" y="5" width="2" height="9" fill="#40a040"/></g></svg><svg style="position:absolute;left:475.1px;top:66.8px" width="14.5" height="14.5" viewBox="0 0 16 16"><g stroke-width="1.25" fill="none"><path d="M2 2l4 1l8 4l-2 7l-7-2z" fill="#40a0c0" stroke="#000" stroke-width="1.56"/><path d="M9 8l5 6" stroke="#000" stroke-width="3.00"/></g></svg><div style="position:absolute;left:219px;top:66px;width:1px;height:16px;background:#808080"></div><div style="position:absolute;left:220px;top:66px;width:1px;height:16px;background:#fff"></div><div style="position:absolute;left:379px;top:66px;width:1px;height:16px;background:#808080"></div><div style="position:absolute;left:380px;top:66px;width:1px;height:16px;background:#fff"></div><div style="position:absolute;left:404px;top:66px;width:1px;height:16px;background:#808080"></div><div style="position:absolute;left:405px;top:66px;width:1px;height:16px;background:#fff"></div><div style="position:absolute;left:469px;top:66px;width:1px;height:16px;background:#808080"></div><div style="position:absolute;left:470px;top:66px;width:1px;height:16px;background:#fff"></div><svg style="position:absolute;left:9.8px;top:89.8px" width="14.5" height="14.5" viewBox="0 0 16 16"><g stroke-width="1.25" fill="none"><path d="M2 6q2-4 8-4h5v5q-2 6-8 7l-5-1z" fill="#f0f000" stroke="#000" stroke-width="1.80"/><path d="M6 8q2-3 5 0q-1 3-4 2" fill="none" stroke="#000"/></g></svg><svg style="position:absolute;left:28.5px;top:89.8px" width="14.5" height="14.5" viewBox="0 0 16 16"><g stroke-width="1.25" fill="none"><path d="M1.5 3.5h13v10h-13z" fill="#60c080" stroke="#000" stroke-width="1.80"/><path d="M2 4l6 5l6-5M2 9h12" fill="none" stroke="#000"/><rect x="3" y="10" width="10" height="2" fill="#f0f000"/></g></svg><svg style="position:absolute;left:47.5px;top:89.8px" width="14.5" height="14.5" viewBox="0 0 16 16"><g stroke-width="1.25" fill="none"><path d="M3 5q3-3 9-2M2 8q5-2 10 0M4 11q4-2 8 0M6 4v10M10 4v10" fill="none" stroke="#000" stroke-width="1.92"/><path d="M3 6h10v5H3z" fill="#f0f000" opacity=".6"/></g></svg><svg style="position:absolute;left:67.0px;top:89.8px" width="14.5" height="14.5" viewBox="0 0 16 16"><g stroke-width="1.25" fill="none"><path d="M3 2v12M8 2v12M13 2v12M3 5h10M3 10h10" stroke="#000" stroke-width="1.68"/><rect x="4" y="6" width="8" height="3" fill="#f0f000"/></g></svg><svg style="position:absolute;left:86.0px;top:89.8px" width="14.5" height="14.5" viewBox="0 0 16 16"><g stroke-width="1.25" fill="none"><path d="M2 6h5v8M7 3h7v6h-4" fill="none" stroke="#000" stroke-width="1.68"/><rect x="3" y="7" width="10" height="3" fill="#f0f000"/><path d="M3 13l2 2" stroke="#000" stroke-width="1.80"/></g></svg><svg style="position:absolute;left:104.8px;top:89.8px" width="14.5" height="14.5" viewBox="0 0 16 16"><g stroke-width="1.25" fill="none"><path d="M1.5 10.5q0-3 7-3q6 0 6 3q0 3-6 3q-7 0-7-3z" fill="#f0f000" stroke="#000" stroke-width="1.56"/><path d="M4 2l3 3M8 2v5M4 6h6" stroke="#008080" stroke-width="1.56"/></g></svg><svg style="position:absolute;left:128.6px;top:89.8px" width="14.5" height="14.5" viewBox="0 0 16 16"><g stroke-width="1.25" fill="none"><path d="M2 12q6 2 12-8M2 9q5 1 9-5M4 14q6 0 10-6" fill="none" stroke="#0050d0" stroke-width="1.92"/></g></svg><svg style="position:absolute;left:148.6px;top:89.8px" width="14.5" height="14.5" viewBox="0 0 16 16"><g stroke-width="1.25" fill="none"><path d="M8 2q-2 2 0 4M3 9h10q2 3-2 4h-6q-3-1-2-4z" fill="#80c0ff" stroke="#0040c0" stroke-width="1.80"/><path d="M3 9q0-3 5-3q5 0 5 3" fill="none" stroke="#0040c0" stroke-width="1.80"/></g></svg><svg style="position:absolute;left:167.4px;top:89.8px" width="14.5" height="14.5" viewBox="0 0 16 16"><g stroke-width="1.25" fill="none"><path d="M2 5q4-3 10 0M2 9q5-3 12 1M4 12l2 3M8 11l1 3M12 10l1 3M6 3v8" fill="none" stroke="#0040c0" stroke-width="1.92"/></g></svg><svg style="position:absolute;left:187.1px;top:89.8px" width="14.5" height="14.5" viewBox="0 0 16 16"><g stroke-width="1.25" fill="none"><path d="M2 8l5-6l7 6l-4 6z" fill="#80b0ff" stroke="#0040c0" stroke-width="1.80"/><path d="M5 5v8M8 6v8M11 8v5" stroke="#0040c0"/></g></svg><svg style="position:absolute;left:207.1px;top:89.8px" width="14.5" height="14.5" viewBox="0 0 16 16"><g stroke-width="1.25" fill="none"><path d="M2 6l6-4l6 5l-5 7z" fill="#a0c0ff" stroke="#0040c0" stroke-width="1.80"/><path d="M1 4l14 9" stroke="#c00000" stroke-width="1.44"/><path d="M3 9l8 5" stroke="#000080" stroke-width="2.40"/></g></svg><svg style="position:absolute;left:226.8px;top:89.8px" width="14.5" height="14.5" viewBox="0 0 16 16"><g stroke-width="1.25" fill="none"><path d="M2 12q0-3 6-3q6 0 6 3q0 2-6 2q-6 0-6-2z" fill="#80c0ff" stroke="#0040c0" stroke-width="1.80"/><path d="M6 9V4h4v5M8 2v2M5 4h6" fill="none" stroke="#0040c0" stroke-width="1.80"/></g></svg><svg style="position:absolute;left:244.8px;top:89.8px" width="14.5" height="14.5" viewBox="0 0 16 16"><g stroke-width="1.25" fill="none"><ellipse cx="8" cy="4" rx="4" ry="2" fill="#80c0ff" stroke="#0040c0" stroke-width="1.80"/><path d="M4 4v6q-2 1-2 3h12q0-2-2-3V4M4 7h8" fill="#80c0ff" stroke="#0040c0" stroke-width="1.80"/></g></svg><svg style="position:absolute;left:264.4px;top:89.8px" width="14.5" height="14.5" viewBox="0 0 16 16"><g stroke-width="1.25" fill="none"><path d="M2 6q0-3 6-3q6 0 6 3v5q0 3-6 3q-6 0-6-3z" fill="#80c0ff" stroke="#0040c0" stroke-width="1.80"/><path d="M2 9h12" stroke="#0040c0"/></g></svg><svg style="position:absolute;left:283.4px;top:89.8px" width="14.5" height="14.5" viewBox="0 0 16 16"><g stroke-width="1.25" fill="none"><path d="M3 10q-2-6 5-8q6 0 6 6q-1 4-4 4" fill="#a0d0ff" stroke="#0040c0" stroke-width="1.80"/><path d="M6 9v6M9 10v5M12 10v4" stroke="#0040c0" stroke-width="1.56"/></g></svg><svg style="position:absolute;left:309.8px;top:89.8px" width="14.5" height="14.5" viewBox="0 0 16 16"><g stroke-width="1.25" fill="none"><circle cx="8" cy="8" r="7.5" fill="#b8d8f8"/><path d="M2 7l4-4M2 11l6-6l6 6M5 14l4-4" fill="none" stroke="#0040c0" stroke-width="1.68"/></g></svg><svg style="position:absolute;left:328.6px;top:89.8px" width="14.5" height="14.5" viewBox="0 0 16 16"><g stroke-width="1.25" fill="none"><circle cx="8" cy="8" r="7.5" fill="#b8d8f8"/><path d="M2 12l10-10M4 14l10-10" stroke="#0040c0" stroke-width="1.56"/><rect x="6" y="4" width="3" height="7" fill="#f0f000" stroke="#000"/></g></svg><svg style="position:absolute;left:347.4px;top:89.8px" width="14.5" height="14.5" viewBox="0 0 16 16"><g stroke-width="1.25" fill="none"><circle cx="8" cy="8" r="7.5" fill="#b8d8f8"/><path d="M2 2l6 6l6-1M2 14l6-6M8 8h6M3 5l3 3" fill="none" stroke="#0040c0" stroke-width="1.80"/></g></svg><svg style="position:absolute;left:371.9px;top:89.8px" width="14.5" height="14.5" viewBox="0 0 16 16"><g stroke-width="1.25" fill="none"><path d="M2 10l6-8l6 5l-3 7h-7z" fill="#80b0ff" stroke="#0040c0" stroke-width="1.80"/><path d="M11 4l4-3M4 8l6 6M7 5l5 5" stroke="#0040c0"/></g></svg><svg style="position:absolute;left:391.6px;top:89.8px" width="14.5" height="14.5" viewBox="0 0 16 16"><g stroke-width="1.25" fill="none"><path d="M1 14l6-5l3 1l5-9" fill="none" stroke="#0040c0" stroke-width="1.56" stroke-dasharray="2 1"/><path d="M3 9l6 5M4 13l5-4" stroke="#d00000" stroke-width="1.92"/></g></svg><svg style="position:absolute;left:410.8px;top:89.8px" width="14.5" height="14.5" viewBox="0 0 16 16"><g stroke-width="1.25" fill="none"><path d="M2 9q0-6 6-7q6 1 6 7z" fill="#80c0ff" stroke="#0040c0" stroke-width="1.80"/><path d="M8 5v10M5 9q3-3 6 0" fill="none" stroke="#0040c0" stroke-width="1.80"/></g></svg><svg style="position:absolute;left:429.8px;top:89.8px" width="14.5" height="14.5" viewBox="0 0 16 16"><g stroke-width="1.25" fill="none"><path d="M2 3h12v3l-3 3v3l-3 3l-3-3v-3l-3-3z" fill="#80c0ff" stroke="#0040c0" stroke-width="1.80"/><path d="M2 6h12" stroke="#0040c0"/></g></svg><svg style="position:absolute;left:455.1px;top:89.8px" width="14.5" height="14.5" viewBox="0 0 16 16"><g stroke-width="1.25" fill="none"><path d="M2 8q0-5 6-5q6 0 6 5q0 5-6 5q-6 0-6-5z" fill="#60c080" stroke="#000" stroke-width="1.56"/><path d="M4 8h8M5 6l6 4M5 10l6-4" stroke="#004000"/></g></svg><svg style="position:absolute;left:473.8px;top:89.8px" width="14.5" height="14.5" viewBox="0 0 16 16"><g stroke-width="1.25" fill="none"><path d="M2 10q0-3 6-3q6 0 6 3q0 3-6 3q-6 0-6-3z" fill="#80c0ff" stroke="#0040c0" stroke-width="1.80"/><path d="M6 7V3h4v4" fill="none" stroke="#0040c0" stroke-width="1.80"/></g></svg><svg style="position:absolute;left:492.8px;top:89.8px" width="14.5" height="14.5" viewBox="0 0 16 16"><g stroke-width="1.25" fill="none"><circle cx="8" cy="8" r="7.5" fill="#b8d8f8"/><path d="M2 14l12-12M6 14l8-8" stroke="#0040c0" stroke-width="1.56"/><path d="M7 3h3v8h-3z" fill="#f0f000" stroke="#000"/></g></svg><svg style="position:absolute;left:512.8px;top:89.8px" width="14.5" height="14.5" viewBox="0 0 16 16"><g stroke-width="1.25" fill="none"><circle cx="8" cy="8" r="7.5" fill="#b8d8f8"/><path d="M2 3l5 5M2 13l12-6M4 14l10-5" stroke="#0040c0" stroke-width="1.80"/><path d="M6 12l9-4v6H6z" fill="#f0f000"/><path d="M3 2l2 2" stroke="#000" stroke-width="2.40"/></g></svg><svg style="position:absolute;left:538.0px;top:89.8px" width="14.5" height="14.5" viewBox="0 0 16 16"><g stroke-width="1.25" fill="none"><rect x="2" y="2" width="12" height="12" fill="#f0f040"/><rect x="3.5" y="3.5" width="9" height="9" fill="#306030" stroke="#000"/><rect x="6" y="6" width="4" height="4" fill="none" stroke="#f0f040"/></g></svg><svg style="position:absolute;left:557.0px;top:89.8px" width="14.5" height="14.5" viewBox="0 0 16 16"><g stroke-width="1.25" fill="none"><path d="M1 4q6 2 14 10" fill="none" stroke="#300040" stroke-width="2.40"/><path d="M2 7q5 2 10 7" fill="none" stroke="#80c0ff" stroke-width="1.44"/></g></svg><svg style="position:absolute;left:576.5px;top:89.8px" width="14.5" height="14.5" viewBox="0 0 16 16"><g stroke-width="1.25" fill="none"><circle cx="8" cy="8" r="7.5" fill="#b8d8f8"/><path d="M2 14q0-10 10-12M5 14q0-6 6-8M8 14q0-3 4-4M11 14v-2" fill="none" stroke="#0040c0" stroke-width="1.80"/><path d="M3 10q3-8 11-8" fill="none" stroke="#d00000" stroke-width="1.56"/></g></svg><svg style="position:absolute;left:595.4px;top:89.8px" width="14.5" height="14.5" viewBox="0 0 16 16"><g stroke-width="1.25" fill="none"><circle cx="8" cy="8" r="7.5" fill="#b8d8f8"/><path d="M2 7l6-5l6 4l-2 3l2 3l-5 3l-6-4h5l-3-2z" fill="none" stroke="#0040c0" stroke-width="1.80"/></g></svg><svg style="position:absolute;left:614.2px;top:89.8px" width="14.5" height="14.5" viewBox="0 0 16 16"><g stroke-width="1.25" fill="none"><path d="M14 2q-10 0-12 6q2 6 12 6v-3q-5 0-6-3q1-3 6-3z" fill="#40a0c0" stroke="#000" stroke-width="1.56"/><path d="M6 8h4" stroke="#fff" stroke-width="2.40"/></g></svg><svg style="position:absolute;left:633.8px;top:89.8px" width="14.5" height="14.5" viewBox="0 0 16 16"><g stroke-width="1.25" fill="none"><path d="M3 3h8v4h-8zM3 9h10v4H3z" fill="#a0c0ff" stroke="#0040c0" stroke-width="1.80"/><path d="M5 5h4" stroke="#000080"/></g></svg><svg style="position:absolute;left:684.2px;top:89.8px" width="14.5" height="14.5" viewBox="0 0 16 16"><g stroke-width="1.25" fill="none"><circle cx="8" cy="8" r="7" fill="#c8e8c8" opacity="0.6"/><path d="M3 8l5-5M5 13l8-8M10 5l2-2M3 12l2-2" stroke="#105010" stroke-width="1.68" stroke-dasharray="2.5 1.5"/></g></svg><svg style="position:absolute;left:709.0px;top:89.8px" width="14.5" height="14.5" viewBox="0 0 16 16"><g stroke-width="1.25" fill="none"><path d="M2 14l12-12" stroke="#008000" stroke-width="1.80"/><circle cx="8" cy="8" r="2" fill="#008000"/></g></svg><svg style="position:absolute;left:734.8px;top:89.8px" width="14.5" height="14.5" viewBox="0 0 16 16"><g stroke-width="1.25" fill="none"><path d="M2 2h12v4h-3v8h-6v-8h-3z" fill="#20c040" stroke="#000" stroke-width="1.56"/><rect x="5.5" y="9" width="5" height="5" fill="#d00000"/></g></svg><div style="position:absolute;left:122px;top:89px;width:1px;height:16px;background:#808080"></div><div style="position:absolute;left:123px;top:89px;width:1px;height:16px;background:#fff"></div><div style="position:absolute;left:368px;top:89px;width:1px;height:16px;background:#808080"></div><div style="position:absolute;left:369px;top:89px;width:1px;height:16px;background:#fff"></div><div style="position:absolute;left:449px;top:89px;width:1px;height:16px;background:#808080"></div><div style="position:absolute;left:450px;top:89px;width:1px;height:16px;background:#fff"></div><div style="position:absolute;left:533px;top:89px;width:1px;height:16px;background:#808080"></div><div style="position:absolute;left:534px;top:89px;width:1px;height:16px;background:#fff"></div><div style="position:absolute;left:704px;top:89px;width:1px;height:16px;background:#808080"></div><div style="position:absolute;left:705px;top:89px;width:1px;height:16px;background:#fff"></div><div style="position:absolute;left:730px;top:89px;width:1px;height:16px;background:#808080"></div><div style="position:absolute;left:731px;top:89px;width:1px;height:16px;background:#fff"></div><svg style="position:absolute;left:5.2px;top:121.8px" width="14.5" height="14.5" viewBox="0 0 16 16"><g stroke-width="1.25" fill="none"><path d="M4 1v12l3-3l2 5l2-1l-2-5h4z" fill="#fff" stroke="#000" stroke-width="1.56"/></g></svg><svg style="position:absolute;left:5.2px;top:146.8px" width="14.5" height="14.5" viewBox="0 0 16 16"><g stroke-width="1.25" fill="none"><path d="M3 3v11h7" fill="none" stroke="#2020c0" stroke-width="1.92"/><path d="M13 2l2 2l-7 8l-3 1l1-3z" fill="#f0e060" stroke="#000" stroke-width="1.56"/></g></svg><svg style="position:absolute;left:5.2px;top:172.3px" width="14.5" height="14.5" viewBox="0 0 16 16"><g stroke-width="1.25" fill="none"><path d="M2 15V2h12" fill="none" stroke="#000" stroke-width="2.40"/><rect x="4" y="4" width="11" height="10" fill="#800080"/><path d="M6 4v9h4" fill="none" stroke="#f0f000" stroke-width="2.40"/><path d="M5 7h3" stroke="#40c040" stroke-width="2.40"/><path d="M10 10l2 3l3-4" fill="none" stroke="#2020c0" stroke-width="2.40"/></g></svg><svg style="position:absolute;left:5.2px;top:208.2px" width="14.5" height="14.5" viewBox="0 0 16 16"><g stroke-width="1.25" fill="none"><path d="M4 1v14M1 4l3-3l3 3M1 12l3 3l3-3" fill="none" stroke="#2020c0" stroke-width="2.16"/><path d="M14 2l2 2l-7 8h-2v-2z" fill="#f0f000" stroke="#000"/><path d="M7 14h8" stroke="#000" stroke-width="1.80"/></g></svg><svg style="position:absolute;left:5.2px;top:224.8px" width="14.5" height="14.5" viewBox="0 0 16 16"><g stroke-width="1.25" fill="none"><rect x="2" y="2" width="6" height="12" fill="#c0c0c0" stroke="#404040" stroke-width="1.80"/><path d="M6 8h8M11 2h4M11 14h4M13 2v12" stroke="#2020c0" stroke-width="1.92"/></g></svg><svg style="position:absolute;left:5.2px;top:250.2px" width="14.5" height="14.5" viewBox="0 0 16 16"><g stroke-width="1.25" fill="none"><path d="M2 8V3h3M5 2v3M5 3h7v4M12 7v6h-3" fill="none" stroke="#2020c0" stroke-width="2.16"/><path d="M9 13h5" stroke="#000" stroke-width="1.80"/></g></svg><svg style="position:absolute;left:5.2px;top:268.9px" width="14.5" height="14.5" viewBox="0 0 16 16"><g stroke-width="1.25" fill="none"><path d="M2 10V4h4" fill="none" stroke="#2020c0" stroke-width="2.16"/><path d="M6 8l7-7M8 9l5-5" stroke="#000" stroke-width="1.56"/><path d="M15 8v7H8z" fill="#000"/></g></svg><svg style="position:absolute;left:5.2px;top:294.2px" width="14.5" height="14.5" viewBox="0 0 16 16"><g stroke-width="1.25" fill="none"><path d="M2 7l5-5M1 5h5M3 15l4-7l7 6M9 10l-3 5M10 8l3 6" fill="none" stroke="#000" stroke-width="1.80"/><path d="M1 6l6-1" stroke="#2020c0" stroke-width="2.40"/></g></svg><svg style="position:absolute;left:5.2px;top:312.9px" width="14.5" height="14.5" viewBox="0 0 16 16"><g stroke-width="1.25" fill="none"><path d="M2 5h12v9h-3v-3h-6v3h-3z" fill="#fff" stroke="#000" stroke-width="2.16"/><ellipse cx="8" cy="4" rx="4" ry="2" fill="#fff" stroke="#000" stroke-width="1.56"/></g></svg><svg style="position:absolute;left:5.2px;top:337.1px" width="14.5" height="14.5" viewBox="0 0 16 16"><g stroke-width="1.25" fill="none"><circle cx="6" cy="9" r="4" fill="#f0f040" stroke="#000" stroke-width="1.56"/><rect x="4" y="12" width="4" height="3" fill="#000"/><path d="M10 2h4v4M14 6l-2-2M15 12H9M11 10l-2 2l2 2" fill="none" stroke="#2020c0" stroke-width="1.92"/></g></svg><svg style="position:absolute;left:805.2px;top:121.2px" width="14.5" height="14.5" viewBox="0 0 16 16"><g stroke-width="1.25" fill="none"><path d="M2 2h3M3 2v13h12M8 14V8M5 7h2" stroke="#000" stroke-width="1.80"/><path d="M14 1l-6 8" stroke="#000" stroke-width="1.56"/><path d="M6 12l8-6v6z" fill="#60c0f0"/></g></svg><svg style="position:absolute;left:805.2px;top:141.8px" width="14.5" height="14.5" viewBox="0 0 16 16"><g stroke-width="1.25" fill="none"><path d="M3 4l2-2M6 4h2M10 4h2M13 2v3" stroke="#000080" stroke-width="1.80"/><rect x="2" y="9" width="12" height="3" fill="#000"/></g></svg><svg style="position:absolute;left:805.2px;top:159.1px" width="14.5" height="14.5" viewBox="0 0 16 16"><g stroke-width="1.25" fill="none"><path d="M2 14V1l12 13z" fill="#fff" stroke="#000" stroke-width="1.80"/><path d="M5 11h4L5 7z" fill="none" stroke="#000"/><path d="M1 14h14" stroke="#000" stroke-width="2.40" stroke-dasharray="2 1"/></g></svg><svg style="position:absolute;left:805.2px;top:176.4px" width="14.5" height="14.5" viewBox="0 0 16 16"><g stroke-width="1.25" fill="none"><path d="M4 6l6-4l4 6l-6 4z" fill="#fff" stroke="#000" stroke-width="1.56"/><path d="M1 2l3 3M1 8l14 7" stroke="#000" stroke-width="1.80"/></g></svg><svg style="position:absolute;left:805.2px;top:202.1px" width="14.5" height="14.5" viewBox="0 0 16 16"><g stroke-width="1.25" fill="none"><path d="M4 2h10v10l-2 3H2l2-3z" fill="#fff" stroke="#000" stroke-width="1.80"/><path d="M6 5h5M6 8h5M6 11h5" stroke="#000"/></g></svg><svg style="position:absolute;left:805.2px;top:219.4px" width="14.5" height="14.5" viewBox="0 0 16 16"><g stroke-width="1.25" fill="none"><path d="M3 2h9l2 2v11H3z" fill="#a0d0f0" stroke="#000080" stroke-width="1.80"/><rect x="6" y="7" width="7" height="6" fill="#fff" stroke="#000" stroke-width="1.56"/><path d="M7 9h2v3M10 9h2v3" stroke="#000"/></g></svg><svg style="position:absolute;left:805.2px;top:256.4px" width="14.5" height="14.5" viewBox="0 0 16 16"><g stroke-width="1.25" fill="none"><path d="M6 1v9h8M2 14l4-4" fill="none" stroke="#000" stroke-width="1.80"/><path d="M10 4l3 3M2 6h2" stroke="#2020c0" stroke-width="1.80"/><circle cx="13" cy="12" r="1" fill="#000"/></g></svg><svg style="position:absolute;left:805.2px;top:273.8px" width="14.5" height="14.5" viewBox="0 0 16 16"><g stroke-width="1.25" fill="none"><path d="M4 15l6-12M1 10h12M8 5l5 5" fill="none" stroke="#000" stroke-width="1.80"/><path d="M10 3l4 3l-3 3" fill="none" stroke="#2020c0" stroke-width="1.56"/></g></svg><svg style="position:absolute;left:805.2px;top:298.4px" width="14.5" height="14.5" viewBox="0 0 16 16"><g stroke-width="1.25" fill="none"><path d="M5 1v13h9M2 14l3-3" fill="none" stroke="#000" stroke-width="1.80"/><path d="M8 4l6 0l0 6l-6-2z" fill="#fff" stroke="#000"/><path d="M7 9l6-6" stroke="#2020c0" stroke-width="1.80"/></g></svg><svg style="position:absolute;left:805.2px;top:326.1px" width="14.5" height="14.5" viewBox="0 0 16 16"><g stroke-width="1.25" fill="none"><path d="M5 1v13h9" fill="none" stroke="#606060" stroke-width="1.56"/><path d="M2 12l3-2" stroke="#606060" stroke-width="1.56"/></g></svg><svg style="position:absolute;left:805.2px;top:343.4px" width="14.5" height="14.5" viewBox="0 0 16 16"><g stroke-width="1.25" fill="none"><path d="M5 1v14M8 1v14M2 14h13M10 9h5M10 12h5" fill="none" stroke="#000" stroke-width="1.56"/><path d="M1 12l4-3" stroke="#2020c0" stroke-width="2.40"/></g></svg><svg style="position:absolute;left:829.2px;top:121.2px" width="14.5" height="14.5" viewBox="0 0 16 16"><g stroke-width="1.25" fill="none"><path d="M2 14L14 2" stroke="#000" stroke-width="1.80"/><path d="M12 3l2-1M2 14l1-1" stroke="#60c0f0" stroke-width="2.40"/></g></svg><svg style="position:absolute;left:829.2px;top:141.8px" width="14.5" height="14.5" viewBox="0 0 16 16"><g stroke-width="1.25" fill="none"><path d="M2 14q1-7 6-8q4-1 6-4" fill="none" stroke="#000080" stroke-width="1.80"/><path d="M3 10l2-3" stroke="#60c0f0" stroke-width="2.40"/></g></svg><svg style="position:absolute;left:829.2px;top:159.1px" width="14.5" height="14.5" viewBox="0 0 16 16"><g stroke-width="1.25" fill="none"><circle cx="8" cy="8" r="6.5" fill="#fff" stroke="#000" stroke-width="1.92"/><path d="M6 8h4M8 6v4" stroke="#000" stroke-width="1.56"/></g></svg><svg style="position:absolute;left:829.2px;top:176.4px" width="14.5" height="14.5" viewBox="0 0 16 16"><g stroke-width="1.25" fill="none"><rect x="2" y="4" width="12" height="8" fill="#fff" stroke="#000" stroke-width="2.16"/></g></svg><svg style="position:absolute;left:829.2px;top:193.8px" width="14.5" height="14.5" viewBox="0 0 16 16"><g stroke-width="1.25" fill="none"><path d="M2 9q0-5 6-5q6 0 6 5q0 3-6 3q-6 0-6-3z" fill="#fff" stroke="#000" stroke-width="1.92"/><circle cx="8" cy="8" r="1" fill="#000"/></g></svg><svg style="position:absolute;left:829.2px;top:214.3px" width="14.5" height="14.5" viewBox="0 0 16 16"><g stroke-width="1.25" fill="none"><path d="M2 14q4 0 4-5t4-5t4-3M14 1v6" fill="none" stroke="#000" stroke-width="1.80"/></g></svg><svg style="position:absolute;left:829.2px;top:229.8px" width="14.5" height="14.5" viewBox="0 0 16 16"><g stroke-width="1.25" fill="none"><rect x="5" y="6" width="8" height="8" fill="#2060e0"/><path d="M5 6l3-3h8" fill="none" stroke="#60c0f0" stroke-width="2.40"/></g></svg><svg style="position:absolute;left:829.2px;top:249.4px" width="14.5" height="14.5" viewBox="0 0 16 16"><g stroke-width="1.25" fill="none"><text x="0.5" y="13" font-family="Liberation Sans" font-size="11" fill="#000" textLength="15" lengthAdjust="spacingAndGlyphs">f(x)</text></g></svg><svg style="position:absolute;left:829.2px;top:266.8px" width="14.5" height="14.5" viewBox="0 0 16 16"><g stroke-width="1.25" fill="none"><circle cx="8" cy="8" r="6.5" fill="#d0e8f8" stroke="#000" stroke-width="1.80"/><circle cx="6" cy="7" r="2.5" fill="#fff"/></g></svg><svg style="position:absolute;left:829.2px;top:286.1px" width="14.5" height="14.5" viewBox="0 0 16 16"><g stroke-width="1.25" fill="none"><path d="M3 1v14h12M3 7q4 0 6 3l3 1" fill="none" stroke="#000" stroke-width="1.56"/></g></svg><svg style="position:absolute;left:829.2px;top:304.6px" width="14.5" height="14.5" viewBox="0 0 16 16"><g stroke-width="1.25" fill="none"><path d="M2 3h11v12M2 7h7v8" fill="none" stroke="#000" stroke-width="2.64"/></g></svg><svg style="position:absolute;left:829.2px;top:322.9px" width="14.5" height="14.5" viewBox="0 0 16 16"><g stroke-width="1.25" fill="none"><path d="M3 6q0-4 4-4l2 2l4-1l2 4l-2 4l-4 4q-6 0-6-4z" fill="#707070"/></g></svg><svg style="position:absolute;left:829.2px;top:340.4px" width="14.5" height="14.5" viewBox="0 0 16 16"><g stroke-width="1.25" fill="none"><ellipse cx="8" cy="9" rx="7" ry="5" fill="#60c0e0"/><path d="M2 9q3-3 6 0t6 0" stroke="#c020c0" stroke-width="1.56" fill="none"/><path d="M3 13q5 2 10 0" stroke="#fff" stroke-width="1.80" fill="none"/><ellipse cx="8" cy="5" rx="4" ry="3" fill="#fff"/></g></svg><svg style="position:absolute;left:829.2px;top:358.8px" width="14.5" height="14.5" viewBox="0 0 16 16"><g stroke-width="1.25" fill="none"><circle cx="9" cy="7" r="5.5" fill="#fff" stroke="#000" stroke-width="1.92"/><path d="M2 9q2 5 6 4M1 12h4" stroke="#000" stroke-width="1.92" fill="none"/><circle cx="10" cy="6" r="2" fill="#4080c0"/></g></svg><svg style="position:absolute;left:829.2px;top:384.1px" width="14.5" height="14.5" viewBox="0 0 16 16"><g stroke-width="1.25" fill="none"><text x="1" y="14.5" font-family="Liberation Serif" font-weight="bold" font-size="17" fill="#000">A</text></g></svg><svg style="position:absolute;left:829.2px;top:407.2px" width="14.5" height="14.5" viewBox="0 0 16 16"><g stroke-width="1.25" fill="none"><path d="M2 10l7-8l4 4l-7 8z" fill="none" stroke="#909090" stroke-width="1.56"/><path d="M4 9l3 3M6 7l4 4" stroke="#909090"/></g></svg><svg style="position:absolute;left:829.2px;top:425.9px" width="14.5" height="14.5" viewBox="0 0 16 16"><g stroke-width="1.25" fill="none"><path d="M2 14V9l4-2l-1-4l3-1l2 4h5v8z" fill="#a0a0a0" stroke="#808080" stroke-width="1.56"/><path d="M4 11h9" stroke="#fff"/></g></svg><svg style="position:absolute;left:829.2px;top:444.8px" width="14.5" height="14.5" viewBox="0 0 16 16"><g stroke-width="1.25" fill="none"><path d="M2 10l6-8l5 3l-3 4l4 3l-3 3l-5-3z" fill="#c0c0c0" stroke="#808080" stroke-width="1.56"/></g></svg><svg style="position:absolute;left:829.2px;top:468.8px" width="14.5" height="14.5" viewBox="0 0 16 16"><g stroke-width="1.25" fill="none"><path d="M2 8v6h12V8M8 2v9M5 8l3 3l3-3" fill="none" stroke="#808080" stroke-width="1.56"/></g></svg><svg style="position:absolute;left:10.4px;top:595.5px" width="14.5" height="14.5" viewBox="0 0 16 16"><g stroke-width="1.25" fill="none"><path d="M2 3l4 1l4-2l4 2v11l-4-2l-4 2l-4-1z" fill="#b0d4f0" stroke="#000" stroke-width="1.68"/><path d="M5 5l6 8" stroke="#fff" stroke-width="2.40"/></g></svg><svg style="position:absolute;left:27.0px;top:595.5px" width="14.5" height="14.5" viewBox="0 0 16 16"><g stroke-width="1.25" fill="none"><path d="M8 1q-4 3-4 8l-3 4h14l-3-4q0-5-4-8z" fill="#b0d4f0" stroke="#000" stroke-width="1.68"/><path d="M8 5v7" stroke="#000" stroke-dasharray="1.5 1.5"/></g></svg><svg style="position:absolute;left:46.5px;top:595.5px" width="14.5" height="14.5" viewBox="0 0 16 16"><g stroke-width="1.25" fill="none"><path d="M2 2h8l4 2v11H6l-4-2z" fill="#b0d4f0" stroke="#000" stroke-width="1.68"/><path d="M5 7h6M8 4v6" stroke="#000080" stroke-width="1.80"/></g></svg><svg style="position:absolute;left:66.3px;top:595.5px" width="14.5" height="14.5" viewBox="0 0 16 16"><g stroke-width="1.25" fill="none"><path d="M2 3h7q5 4 5 11H2z" fill="#b0d4f0" stroke="#000" stroke-width="1.68"/><path d="M5 8h4M7 5v6" stroke="#000080" stroke-width="1.80"/></g></svg><svg style="position:absolute;left:87.5px;top:595.5px" width="14.5" height="14.5" viewBox="0 0 16 16"><g stroke-width="1.25" fill="none"><path d="M2 4l4-2v11l-4 2zM10 3l4-2v11l-4 2z" fill="#b0d4f0" stroke="#000" stroke-width="1.92"/><path d="M6 6h4M6 10h4M2 8h12" stroke="#000" stroke-width="1.56"/></g></svg><svg style="position:absolute;left:106.7px;top:595.5px" width="14.5" height="14.5" viewBox="0 0 16 16"><g stroke-width="1.25" fill="none"><path d="M1 12l5-6h9l-5 6z" fill="#b0d4f0" stroke="#000" stroke-width="1.68"/></g></svg><svg style="position:absolute;left:124.3px;top:595.5px" width="14.5" height="14.5" viewBox="0 0 16 16"><g stroke-width="1.25" fill="none"><path d="M1 7l4-4l5 3l5-1l-2 6l-5 3z" fill="#b0d4f0" stroke="#000" stroke-width="1.68"/></g></svg><svg style="position:absolute;left:143.8px;top:595.5px" width="14.5" height="14.5" viewBox="0 0 16 16"><g stroke-width="1.25" fill="none"><path d="M1 8l4-5l4 3l6-1l-3 6l-5 2z" fill="#b0d4f0" stroke="#000" stroke-width="1.68"/><path d="M5 3l4 6" stroke="#000"/></g></svg><svg style="position:absolute;left:162.6px;top:595.5px" width="14.5" height="14.5" viewBox="0 0 16 16"><g stroke-width="1.25" fill="none"><path d="M1 7l5-4l4 3l5-1l-3 6l-5 2z" fill="#b0d4f0" stroke="#000" stroke-width="1.68"/><path d="M3 6l9 4M6 4l4 7" stroke="#000"/></g></svg><svg style="position:absolute;left:181.9px;top:595.5px" width="14.5" height="14.5" viewBox="0 0 16 16"><g stroke-width="1.25" fill="none"><rect x="2" y="5" width="9" height="9" fill="#b0d4f0" stroke="#000" stroke-width="1.92"/><path d="M2 5l3-3h9v9l-3 3M11 5l3-3" fill="none" stroke="#000" stroke-dasharray="1.5 1"/></g></svg><svg style="position:absolute;left:219.2px;top:595.5px" width="14.5" height="14.5" viewBox="0 0 16 16"><g stroke-width="1.25" fill="none"><path d="M1 12l5-8h9l-5 8z" fill="#f0f020" stroke="#000" stroke-width="1.92"/><path d="M3 9h8" stroke="#000"/></g></svg><svg style="position:absolute;left:244.7px;top:595.5px" width="14.5" height="14.5" viewBox="0 0 16 16"><g stroke-width="1.25" fill="none"><path d="M6 1v14M3 8q0-5 5-4q4 1 3 4" fill="none" stroke="#000" stroke-width="1.68"/><path d="M2 10h5v5H2zM9 10h4v5H9z" fill="none" stroke="#000080" stroke-width="1.80"/></g></svg><svg style="position:absolute;left:262.2px;top:595.5px" width="14.5" height="14.5" viewBox="0 0 16 16"><g stroke-width="1.25" fill="none"><path d="M2 15V8q1-5 7-6h6" fill="none" stroke="#000" stroke-width="1.80" stroke-dasharray="2 1"/><path d="M4 12q1-6 7-8" fill="none" stroke="#60b0f0" stroke-width="2.40"/></g></svg><svg style="position:absolute;left:282.1px;top:595.5px" width="14.5" height="14.5" viewBox="0 0 16 16"><g stroke-width="1.25" fill="none"><path d="M2 15q0-5 5-8l4-4h4" fill="none" stroke="#000" stroke-width="2.40"/><path d="M5 9q3-4 8-5" fill="none" stroke="#40c0c0" stroke-width="2.40"/></g></svg><svg style="position:absolute;left:300.4px;top:595.5px" width="14.5" height="14.5" viewBox="0 0 16 16"><g stroke-width="1.25" fill="none"><path d="M1 11h8q5 0 5-3t-4-3h-3" fill="none" stroke="#000" stroke-width="1.92"/><path d="M5 5l2-2v4z" fill="#000"/></g></svg><svg style="position:absolute;left:319.8px;top:595.5px" width="14.5" height="14.5" viewBox="0 0 16 16"><g stroke-width="1.25" fill="none"><path d="M2 5h2M6 5h2q4 0 4 3q0 4-4 4" fill="none" stroke="#000" stroke-width="1.80"/><path d="M8 12l2 2" stroke="#000" stroke-width="1.80"/></g></svg><svg style="position:absolute;left:339.4px;top:595.5px" width="14.5" height="14.5" viewBox="0 0 16 16"><g stroke-width="1.25" fill="none"><path d="M1 6h12q2 0 2 2t-2 2H3q-2 0-2 2t2 2h9" fill="none" stroke="#000" stroke-width="1.80"/></g></svg><svg style="position:absolute;left:365.8px;top:595.5px" width="14.5" height="14.5" viewBox="0 0 16 16"><g stroke-width="1.25" fill="none"><path d="M1 14l3-8l3 3l4-1l3-6" fill="none" stroke="#000" stroke-width="1.80"/><path d="M3 8l4 3l4-3" fill="none" stroke="#2040c0" stroke-width="1.92"/></g></svg><svg style="position:absolute;left:385.4px;top:595.5px" width="14.5" height="14.5" viewBox="0 0 16 16"><g stroke-width="1.25" fill="none"><path d="M1 14l3-8l3 3l4-1l3-6" fill="none" stroke="#000" stroke-width="1.80"/><path d="M3 8l4 3l4-3" fill="none" stroke="#d02020" stroke-width="1.92"/></g></svg><svg style="position:absolute;left:403.1px;top:595.5px" width="14.5" height="14.5" viewBox="0 0 16 16"><g stroke-width="1.25" fill="none"><path d="M1 14l3-8h10M14 2l-4 10H5" fill="none" stroke="#000" stroke-width="1.80"/><path d="M3 9h11" stroke="#d02020" stroke-width="2.16"/></g></svg><svg style="position:absolute;left:427.8px;top:595.5px" width="14.5" height="14.5" viewBox="0 0 16 16"><g stroke-width="1.25" fill="none"><path d="M2 2l5 6l-3 6M10 2l2 4l-4 8M6 9h8" fill="none" stroke="#000080" stroke-width="1.92"/><rect x="8" y="1" width="7" height="5" fill="#80b0f0"/></g></svg><svg style="position:absolute;left:447.2px;top:595.5px" width="14.5" height="14.5" viewBox="0 0 16 16"><g stroke-width="1.25" fill="none"><path d="M3 13l4-9h6l-2 9z" fill="#b0d4f0" stroke="#000" stroke-width="1.68"/><path d="M1 12l5 3l5-2" fill="none" stroke="#000" stroke-width="1.80"/></g></svg><svg style="position:absolute;left:466.8px;top:595.5px" width="14.5" height="14.5" viewBox="0 0 16 16"><g stroke-width="1.25" fill="none"><path d="M5 2h7l2 6l-4 6l-6-2z" fill="#b0d4f0" stroke="#000" stroke-width="1.68"/><path d="M2 6q0 5 5 6M3 9q2 2 4 2" fill="none" stroke="#000" stroke-width="1.56"/></g></svg><svg style="position:absolute;left:486.1px;top:595.5px" width="14.5" height="14.5" viewBox="0 0 16 16"><g stroke-width="1.25" fill="none"><path d="M6 3l6-1v10l-5 3z" fill="#b0d4f0" stroke="#000" stroke-width="1.68"/><path d="M1 12l6 3M2 10h6" stroke="#000" stroke-width="1.80"/></g></svg><svg style="position:absolute;left:505.6px;top:595.5px" width="14.5" height="14.5" viewBox="0 0 16 16"><g stroke-width="1.25" fill="none"><path d="M1 7l5-5l8 3l-1 7l-5 3z" fill="#b0d4f0" stroke="#000" stroke-width="1.68"/></g></svg><svg style="position:absolute;left:525.0px;top:595.5px" width="14.5" height="14.5" viewBox="0 0 16 16"><g stroke-width="1.25" fill="none"><path d="M1 8l6-6l7 3v8l-6 2z" fill="#b0d4f0" stroke="#000" stroke-width="1.68"/><path d="M7 2v13" stroke="#000"/></g></svg><svg style="position:absolute;left:544.5px;top:595.5px" width="14.5" height="14.5" viewBox="0 0 16 16"><g stroke-width="1.25" fill="none"><path d="M2 6l5-4l7 4l-4 8l-7-3z" fill="#b0d4f0" stroke="#000" stroke-width="1.68"/><path d="M5 4l5 7" stroke="#fff" stroke-width="1.80"/></g></svg><svg style="position:absolute;left:580.8px;top:595.5px" width="14.5" height="14.5" viewBox="0 0 16 16"><g stroke-width="1.25" fill="none"><circle cx="4" cy="4" r="3" fill="#b0d4f0" stroke="#000" stroke-width="1.56"/><circle cx="12" cy="12" r="3" fill="#b0d4f0" stroke="#000" stroke-width="1.56"/><path d="M7 3l5 5" stroke="#000" stroke-dasharray="1.5 1" stroke-width="1.56"/></g></svg><svg style="position:absolute;left:599.6px;top:595.5px" width="14.5" height="14.5" viewBox="0 0 16 16"><g stroke-width="1.25" fill="none"><path d="M8 1v14M1 9h14" stroke="#000" stroke-width="1.80"/><path d="M8 2l-5 7h10z" fill="#b0d4f0" stroke="#000"/><path d="M5 12q3 3 6 0" fill="none" stroke="#000" stroke-width="1.80"/></g></svg><svg style="position:absolute;left:619.5px;top:595.5px" width="14.5" height="14.5" viewBox="0 0 16 16"><g stroke-width="1.25" fill="none"><path d="M5 4h6v6q2 1 2 3l-5 2l-5-2q0-2 2-3z" fill="#b0d4f0" stroke="#000" stroke-width="1.68"/><path d="M8 0v3M8 6v6" stroke="#000" stroke-dasharray="1.5 1"/></g></svg><svg style="position:absolute;left:637.5px;top:595.5px" width="14.5" height="14.5" viewBox="0 0 16 16"><g stroke-width="1.25" fill="none"><path d="M7 2L2 14h5zM9 2l5 12H9z" fill="#b0d4f0" stroke="#000" stroke-width="1.68"/><path d="M8 1v15" stroke="#000" stroke-width="1.56"/></g></svg><svg style="position:absolute;left:656.5px;top:595.5px" width="14.5" height="14.5" viewBox="0 0 16 16"><g stroke-width="1.25" fill="none"><path d="M4 6h8v8H4z" fill="#b0d4f0" stroke="#000" stroke-width="1.68"/><path d="M8 0v16M2 14h12" stroke="#000" stroke-width="1.68"/></g></svg><svg style="position:absolute;left:675.5px;top:595.5px" width="14.5" height="14.5" viewBox="0 0 16 16"><g stroke-width="1.25" fill="none"><path d="M2 2h4v4H2zM10 2h4v4h-4zM2 10h4v4H2zM10 10h4v4h-4z" fill="#fff" stroke="#000" stroke-width="1.80"/></g></svg><svg style="position:absolute;left:693.8px;top:595.5px" width="14.5" height="14.5" viewBox="0 0 16 16"><g stroke-width="1.25" fill="none"><rect x="6" y="2" width="9" height="8" fill="#fff" stroke="#000" stroke-width="1.68" stroke-dasharray="2 1"/><rect x="2" y="7" width="7" height="7" fill="#fff" stroke="#000" stroke-width="1.92"/><circle cx="12" cy="5" r="1" fill="#000"/></g></svg><div style="position:absolute;left:239px;top:595px;width:1px;height:16px;background:#808080"></div><div style="position:absolute;left:240px;top:595px;width:1px;height:16px;background:#fff"></div><div style="position:absolute;left:360px;top:595px;width:1px;height:16px;background:#808080"></div><div style="position:absolute;left:361px;top:595px;width:1px;height:16px;background:#fff"></div><div style="position:absolute;left:424px;top:595px;width:1px;height:16px;background:#808080"></div><div style="position:absolute;left:425px;top:595px;width:1px;height:16px;background:#fff"></div><div style="position:absolute;left:211px;top:594px;width:3px;height:18px;box-sizing:border-box;border-top:1px solid #fff;border-left:1px solid #fff;border-right:1px solid #808080;border-bottom:1px solid #808080"></div><div style="position:absolute;left:37px;top:130px;width:1px;height:86px;background:repeating-linear-gradient(to bottom,#808080 0 1px,transparent 1px 2px)"></div><div style="position:absolute;left:56px;top:222px;width:1px;height:10px;background:repeating-linear-gradient(to bottom,#808080 0 1px,transparent 1px 2px)"></div><div style="position:absolute;left:74px;top:240px;width:1px;height:55px;background:repeating-linear-gradient(to bottom,#808080 0 1px,transparent 1px 2px)"></div><svg style="position:absolute;left:32.0px;top:115.7px" width="13.5" height="13.5" viewBox="0 0 16 16"><g stroke-width="1.25" fill="none"><path d="M1.5 7.5h4l3-3h6v10h-13z" fill="#c0c0c0" stroke="#000" stroke-width="1.56"/><path d="M3 9l4-6l4 2l-2 4z" fill="#40d0d0" stroke="#000"/></g></svg><div style="position:absolute;left:49.7px;top:115.9px;white-space:nowrap;transform-origin:0 0;transform:scaleX(0.9500);font-size:10px;line-height:12px">加工</div><svg style="position:absolute;left:49.2px;top:130.8px" width="13.5" height="13.5" viewBox="0 0 16 16"><g stroke-width="1.25" fill="none"><path d="M2 4l3-3h9v11l-3 3H2z" fill="#40d0d0" stroke="#000" stroke-width="1.68"/><circle cx="9" cy="8" r="3.5" fill="#fff" stroke="#000"/><circle cx="9" cy="8" r="1.2" fill="#40a0a0"/></g></svg><div style="position:absolute;left:68px;top:131.0px;white-space:nowrap;transform-origin:0 0;transform:scaleX(0.9500);font-size:10px;line-height:12px">模型</div><div style="position:absolute;left:38px;top:137px;width:11px;height:1px;background:repeating-linear-gradient(to right,#808080 0 1px,transparent 1px 2px)"></div><svg style="position:absolute;left:49.2px;top:146.2px" width="13.5" height="13.5" viewBox="0 0 16 16"><g stroke-width="1.25" fill="none"><path d="M2 5l3-3h9v10l-3 3H2z" fill="#40d0d0" stroke="#000" stroke-width="1.68"/><rect x="5" y="6" width="5" height="5" fill="#008080" stroke="#000"/></g></svg><div style="position:absolute;left:68px;top:146.4px;white-space:nowrap;transform-origin:0 0;transform:scaleX(0.9500);font-size:10px;line-height:12px">毛坯</div><div style="position:absolute;left:38px;top:152px;width:11px;height:1px;background:repeating-linear-gradient(to right,#808080 0 1px,transparent 1px 2px)"></div><svg style="position:absolute;left:49.2px;top:161.8px" width="13.5" height="13.5" viewBox="0 0 16 16"><g stroke-width="1.25" fill="none"><path d="M8 1v14M1 8h14" stroke="#000" stroke-width="1.92"/><circle cx="8" cy="8" r="4" fill="none" stroke="#000" stroke-width="1.80"/><path d="M4 8a4 4 0 0 1 4-4v4z" fill="#40d0d0"/></g></svg><div style="position:absolute;left:68px;top:162.1px;white-space:nowrap;transform-origin:0 0;transform:scaleX(0.9567);font-size:10px;line-height:12px">起始点</div><div style="position:absolute;left:38px;top:168px;width:11px;height:1px;background:repeating-linear-gradient(to right,#808080 0 1px,transparent 1px 2px)"></div><svg style="position:absolute;left:49.2px;top:177.8px" width="13.5" height="13.5" viewBox="0 0 16 16"><g stroke-width="1.25" fill="none"><path d="M2 15V3l4-2v8h8v6z" fill="#40d0d0" stroke="#000" stroke-width="1.68"/><path d="M2 12h12" stroke="#008080" stroke-width="2.40"/></g></svg><div style="position:absolute;left:68px;top:178.0px;white-space:nowrap;transform-origin:0 0;transform:scaleX(0.9400);font-size:10px;line-height:12px">机床后置：fanuc</div><div style="position:absolute;left:38px;top:184px;width:11px;height:1px;background:repeating-linear-gradient(to right,#808080 0 1px,transparent 1px 2px)"></div><svg style="position:absolute;left:49.2px;top:193.2px" width="13.5" height="13.5" viewBox="0 0 16 16"><g stroke-width="1.25" fill="none"><path d="M3 2h10v5h-3v8H6V7H3z" fill="#40d0d0" stroke="#000" stroke-width="1.68"/></g></svg><div style="position:absolute;left:68px;top:193.5px;white-space:nowrap;transform-origin:0 0;transform:scaleX(0.9307);font-size:10px;line-height:12px">刀具库：fanuc</div><div style="position:absolute;left:38px;top:200px;width:11px;height:1px;background:repeating-linear-gradient(to right,#808080 0 1px,transparent 1px 2px)"></div><svg style="position:absolute;left:50.2px;top:209.2px" width="13.5" height="13.5" viewBox="0 0 16 16"><g stroke-width="1.25" fill="none"><path d="M1.5 4.5h5l1 1h7v9h-13z" fill="#f0f040" stroke="#000" stroke-width="1.56"/><path d="M1.5 7.5h13" stroke="#000"/><path d="M14 6v9" stroke="#000" stroke-width="2.40"/></g></svg><div style="position:absolute;left:68px;top:209.5px;white-space:nowrap;transform-origin:0 0;transform:scaleX(0.9492);font-size:10px;line-height:12px">刀具轨迹：共 1 条</div><div style="position:absolute;left:38px;top:216px;width:11px;height:1px;background:repeating-linear-gradient(to right,#808080 0 1px,transparent 1px 2px)"></div><svg style="position:absolute;left:67.7px;top:225.2px" width="13.5" height="13.5" viewBox="0 0 16 16"><g stroke-width="1.25" fill="none"><path d="M1.5 4.5h5l1 1h7v9h-13z" fill="#f0f040" stroke="#000" stroke-width="1.56"/><path d="M1.5 7.5h13" stroke="#000"/><path d="M14 6v9" stroke="#000" stroke-width="2.40"/></g></svg><div style="position:absolute;left:86.2px;top:225.5px;white-space:nowrap;transform-origin:0 0;transform:scaleX(0.9723);font-size:10px;line-height:12px">1-四轴曲线加工</div><div style="position:absolute;left:57px;top:232px;width:10px;height:1px;background:repeating-linear-gradient(to right,#808080 0 1px,transparent 1px 2px)"></div><svg style="position:absolute;left:85.0px;top:241.2px" width="13.5" height="13.5" viewBox="0 0 16 16"><g stroke-width="1.25" fill="none"><path d="M8 0v6" stroke="#c00000"/><ellipse cx="8" cy="10" rx="6.5" ry="4" fill="#fff" stroke="#2020c0" stroke-width="1.80"/><path d="M3 12l8-6M5 13l8-6M2 10l6-4" stroke="#2020c0" stroke-width="1.44"/></g></svg><div style="position:absolute;left:103.6px;top:241.5px;white-space:nowrap;transform-origin:0 0;transform:scaleX(0.9750);font-size:10px;line-height:12px">轨迹数据</div><div style="position:absolute;left:75px;top:248px;width:10px;height:1px;background:repeating-linear-gradient(to right,#808080 0 1px,transparent 1px 2px)"></div><svg style="position:absolute;left:85.0px;top:256.8px" width="13.5" height="13.5" viewBox="0 0 16 16"><g stroke-width="1.25" fill="none"><path d="M2 2h5l1 2h6v10H2z" fill="#fff" stroke="#2020c0" stroke-width="1.80"/><path d="M2 7h12M2 10h12" stroke="#2020c0" stroke-width="1.80"/></g></svg><div style="position:absolute;left:103.6px;top:257.0px;white-space:nowrap;transform-origin:0 0;transform:scaleX(0.9750);font-size:10px;line-height:12px">加工参数</div><div style="position:absolute;left:75px;top:263px;width:10px;height:1px;background:repeating-linear-gradient(to right,#808080 0 1px,transparent 1px 2px)"></div><svg style="position:absolute;left:85.0px;top:272.2px" width="13.5" height="13.5" viewBox="0 0 16 16"><g stroke-width="1.25" fill="none"><path d="M5 1l6 1v10l-3 3l-3-2z" fill="#2020c0"/><path d="M7 5l2 1M7 9l2-4" stroke="#fff"/></g></svg><div style="position:absolute;left:0;top:0;width:172px;height:380px;overflow:hidden"><div style="position:absolute;left:103.6px;top:272.5px;white-space:nowrap;transform-origin:0 0;transform:scaleX(0.9579);font-size:10px;line-height:12px">铣刀 D8r4 No:4 F</div></div><div style="position:absolute;left:75px;top:279px;width:10px;height:1px;background:repeating-linear-gradient(to right,#808080 0 1px,transparent 1px 2px)"></div><svg style="position:absolute;left:85.0px;top:288.2px" width="13.5" height="13.5" viewBox="0 0 16 16"><g stroke-width="1.25" fill="none"><path d="M2 14V2l12 12z" fill="#2020c0"/><path d="M5 12V8l4 4z" fill="#fff"/></g></svg><div style="position:absolute;left:103.6px;top:288.5px;white-space:nowrap;transform-origin:0 0;transform:scaleX(0.9750);font-size:10px;line-height:12px">几何元素</div><div style="position:absolute;left:75px;top:295px;width:10px;height:1px;background:repeating-linear-gradient(to right,#808080 0 1px,transparent 1px 2px)"></div><div style="position:absolute;left:33px;top:196px;width:9px;height:9px;box-sizing:border-box;background:#fff;border:1px solid #808080"></div><div style="position:absolute;left:35px;top:200px;width:5px;height:1px;background:#000"></div><div style="position:absolute;left:37px;top:198px;width:1px;height:5px;background:#000"></div><div style="position:absolute;left:33px;top:212px;width:9px;height:9px;box-sizing:border-box;background:#fff;border:1px solid #808080"></div><div style="position:absolute;left:35px;top:216px;width:5px;height:1px;background:#000"></div><div style="position:absolute;left:52px;top:228px;width:9px;height:9px;box-sizing:border-box;background:#fff;border:1px solid #808080"></div><div style="position:absolute;left:54px;top:232px;width:5px;height:1px;background:#000"></div><div style="position:absolute;left:70px;top:291px;width:9px;height:9px;box-sizing:border-box;background:#fff;border:1px solid #808080"></div><div style="position:absolute;left:72px;top:295px;width:5px;height:1px;background:#000"></div><div style="position:absolute;left:74px;top:293px;width:1px;height:5px;background:#000"></div><svg style="position:absolute;left:35.5px;top:389.0px" width="12" height="12" viewBox="0 0 16 16"><g stroke-width="1.25" fill="none"><path d="M1.5 7.5h4l2-3h7v10h-13z" fill="#c0c0c0" stroke="#000" stroke-width="1.56"/><path d="M3 8l5-5l4 3l-3 3z" fill="#40d0d0" stroke="#000"/></g></svg><svg style="position:absolute;left:104.0px;top:389.0px" width="12" height="12" viewBox="0 0 16 16"><g stroke-width="1.25" fill="none"><ellipse cx="8" cy="3.5" rx="5" ry="2" fill="#fff" stroke="#000" stroke-width="1.56"/><path d="M3 3.5v9q0 2 5 2t5-2v-9" fill="#40d040" stroke="#000" stroke-width="1.56"/><path d="M3 7q0 2 5 2t5-2M3 10q0 2 5 2t5-2" fill="none" stroke="#000"/><path d="M4 11q1 2 4 2t4-2" fill="none" stroke="#40d0d0" stroke-width="2.40"/></g></svg><svg style="position:absolute;left:0;top:0" width="848" height="636" viewBox="0 0 848 636">
<defs>
<clipPath id="vp"><rect x="181" y="109" width="619" height="480"/></clipPath>
<clipPath id="bodyclip"><path d="M291.0 143.4 L756.0 437.0 A22 72.7 31.50 0 1 680.0 561.0 L218.0 256.5 A14 67.3 32.84 0 1 291.0 143.4 Z"/></clipPath>
<linearGradient id="gb" gradientUnits="userSpaceOnUse" x1="524.2" y1="290.6" x2="448.3" y2="408.3"><stop offset="0" stop-color="#a4a4a4"/><stop offset="0.04" stop-color="#b4b4b4"/><stop offset="0.2" stop-color="#bababa"/><stop offset="0.36" stop-color="#bababa"/><stop offset="0.5" stop-color="#a8a8a8"/><stop offset="0.62" stop-color="#8a8a8a"/><stop offset="0.74" stop-color="#626262"/><stop offset="0.86" stop-color="#424242"/><stop offset="0.94" stop-color="#2e2e2e"/><stop offset="0.98" stop-color="#363636"/><stop offset="1" stop-color="#b8b8b8"/></linearGradient>
<linearGradient id="ga" gradientUnits="userSpaceOnUse" x1="254.5" y1="199.9" x2="718.0" y2="499.0"><stop offset="0" stop-color="#000" stop-opacity="0.12"/><stop offset="0.5" stop-color="#000" stop-opacity="0.06"/><stop offset="0.75" stop-color="#000" stop-opacity="0"/><stop offset="1" stop-color="#fff" stop-opacity="0.08"/></linearGradient>
<linearGradient id="gm" gradientUnits="userSpaceOnUse" x1="524.2" y1="290.6" x2="448.3" y2="408.3"><stop offset="0.3" stop-color="#000"/><stop offset="0.7" stop-color="#fff"/></linearGradient>
<mask id="lowmask" maskUnits="userSpaceOnUse" x="0" y="0" width="848" height="636"><rect x="0" y="0" width="848" height="636" fill="url(#gm)"/></mask>
</defs>
<g clip-path="url(#vp)">
<path d="M291.0 143.4 L756.0 437.0 A22 72.7 31.50 0 1 680.0 561.0 L218.0 256.5 A14 67.3 32.84 0 1 291.0 143.4 Z" fill="url(#gb)"/>
<path d="M291.0 143.4 L756.0 437.0 A22 72.7 31.50 0 1 680.0 561.0 L218.0 256.5 A14 67.3 32.84 0 1 291.0 143.4 Z" fill="url(#ga)" mask="url(#lowmask)"/>
<ellipse cx="718.0" cy="499.0" rx="22" ry="72.7" transform="rotate(31.50 718.0 499.0)" fill="#6a6a6a"/>
</g>
</svg><svg style="position:absolute;left:0;top:0" width="848" height="636" viewBox="0 0 848 636"><g clip-path="url(#vp)"><g clip-path="url(#bodyclip)"><path d="M276.0 292.0 C288.3 292.1 324.3 291.9 350.0 292.5 C375.7 293.1 405.8 294.2 430.0 295.5 C454.2 296.8 484.2 299.2 495.0 300.0 L495.0 305.0 L495.0 305.0 C484.2 304.1 454.2 301.1 430.0 299.5 C405.8 297.9 375.7 296.3 350.0 295.5 C324.3 294.7 288.3 294.7 276.0 294.5 Z" fill="#3a3a3a" /><path d="M276.0 294.5 C288.3 294.7 324.3 294.7 350.0 295.5 C375.7 296.3 405.8 297.9 430.0 299.5 C454.2 301.1 484.2 304.1 495.0 305.0 L495.0 308.0 L495.0 308.0 C484.2 307.3 454.2 305.4 430.0 304.0 C405.8 302.6 375.7 300.7 350.0 299.5 C324.3 298.3 288.3 297.4 276.0 297.0 Z" fill="#7a7a7a" /><path d="M278.0 297.0 C290.0 297.4 324.7 298.3 350.0 299.5 C375.3 300.7 405.8 302.6 430.0 304.0 C454.2 305.4 484.2 307.3 495.0 308.0 L490.0 320.0 L490.0 320.0 C480.0 319.3 453.3 317.7 430.0 316.0 C406.7 314.3 373.3 311.3 350.0 310.0 C326.7 308.7 300.0 308.3 290.0 308.0 Z" fill="#b8b8b8" /><path d="M496.0 302.0 C503.3 303.3 526.8 307.0 540.0 310.0 C553.2 313.0 565.0 315.7 575.0 320.0 C585.0 324.3 595.8 333.3 600.0 336.0 L598.0 340.0 L598.0 340.0 C594.2 337.7 584.7 330.2 575.0 326.0 C565.3 321.8 553.2 318.2 540.0 315.0 C526.8 311.8 503.3 308.3 496.0 307.0 Z" fill="#3c3c3c" /><path d="M500.0 311.0 C506.7 312.2 527.5 315.0 540.0 318.0 C552.5 321.0 565.7 325.0 575.0 329.0 C584.3 333.0 592.5 339.8 596.0 342.0 L592.0 346.0 L592.0 346.0 C588.3 344.3 578.7 339.3 570.0 336.0 C561.3 332.7 550.2 329.0 540.0 326.0 C529.8 323.0 514.2 319.3 509.0 318.0 Z" fill="#b8b8b8" /><path d="M509.0 318.0 C514.2 319.3 529.8 323.0 540.0 326.0 C550.2 329.0 561.3 332.7 570.0 336.0 C578.7 339.3 588.3 344.3 592.0 346.0" fill="none" stroke="#202020" stroke-width="1" stroke-dasharray="2 1.5" opacity="0.7"/><path d="M462.0 251.0 C464.5 254.2 472.3 263.5 477.0 270.0 C481.7 276.5 486.7 284.5 490.0 290.0 C493.3 295.5 495.8 300.8 497.0 303.0 L501.0 300.0 L501.0 300.0 C500.0 297.8 498.2 292.0 495.0 287.0 C491.8 282.0 486.5 275.7 482.0 270.0 C477.5 264.3 470.3 255.8 468.0 253.0 Z" fill="#3a3a3a" /><path d="M458.0 256.0 C460.0 258.8 466.0 267.0 470.0 273.0 C474.0 279.0 478.7 286.2 482.0 292.0 C485.3 297.8 488.7 305.3 490.0 308.0 L495.0 307.0 L495.0 307.0 C493.8 304.5 491.2 297.7 488.0 292.0 C484.8 286.3 480.3 279.7 476.0 273.0 C471.7 266.3 464.3 255.5 462.0 252.0 Z" fill="#c4c4c4" /><defs><linearGradient id="lensg" gradientUnits="userSpaceOnUse" x1="524.2" y1="290.6" x2="448.3" y2="408.3"><stop offset="0.4" stop-color="#fff" stop-opacity="0"/><stop offset="0.72" stop-color="#fff" stop-opacity="0.2"/><stop offset="0.95" stop-color="#fff" stop-opacity="0.12"/></linearGradient></defs><path d="M505.0 319.0 C507.5 324.2 514.3 338.7 520.0 350.0 C525.7 361.3 532.0 374.0 539.0 387.0 C546.0 400.0 554.0 414.7 562.0 428.0 C570.0 441.3 578.7 455.0 587.0 467.0 C595.3 479.0 604.2 489.8 612.0 500.0 C619.8 510.2 628.5 522.7 634.0 528.0 C639.5 533.3 640.3 532.0 645.0 532.0 C649.7 532.0 655.5 531.3 662.0 528.0 C668.5 524.7 678.0 518.7 684.0 512.0 C690.0 505.3 695.1 497.3 698.0 488.0 C700.9 478.7 702.5 467.7 701.5 456.0 C700.5 444.3 696.9 429.7 692.0 418.0 C687.1 406.3 680.2 394.8 672.0 386.0 C663.8 377.2 653.8 372.0 643.0 365.0 C632.2 358.0 617.4 349.8 607.0 344.0 C596.6 338.2 591.3 334.4 580.6 330.0 C569.9 325.6 557.3 321.4 543.0 317.7 C528.7 314.0 503.0 309.6 495.0 308.0 Z" fill="url(#lensg)"/><path d="M489.0 318.0 C491.7 323.3 499.5 339.0 505.0 350.0 C510.5 361.0 515.3 370.7 522.0 384.0 C528.7 397.3 536.7 414.3 545.0 430.0 C553.3 445.7 563.2 465.0 572.0 478.0 C580.8 491.0 589.0 499.5 598.0 508.0 C607.0 516.5 621.3 525.5 626.0 529.0 L633.0 530.0 L633.0 530.0 C628.7 525.8 615.7 515.2 607.0 505.0 C598.3 494.8 589.7 481.8 581.0 469.0 C572.3 456.2 563.3 441.2 555.0 428.0 C546.7 414.8 538.0 403.0 531.0 390.0 C524.0 377.0 519.0 363.5 513.0 350.0 C507.0 336.5 498.0 315.8 495.0 309.0 Z" fill="#bcbcbc" /><path d="M489.0 318.0 C491.7 323.3 499.5 339.0 505.0 350.0 C510.5 361.0 515.3 370.7 522.0 384.0 C528.7 397.3 536.7 414.3 545.0 430.0 C553.3 445.7 563.2 465.0 572.0 478.0 C580.8 491.0 589.0 499.5 598.0 508.0 C607.0 516.5 621.3 525.5 626.0 529.0" fill="none" stroke="#202020" stroke-width="1" stroke-dasharray="2 1.5" opacity="0.8"/><path d="M495.0 309.0 C498.0 315.8 507.0 336.5 513.0 350.0 C519.0 363.5 524.0 377.0 531.0 390.0 C538.0 403.0 546.7 414.8 555.0 428.0 C563.3 441.2 572.3 456.2 581.0 469.0 C589.7 481.8 598.3 494.8 607.0 505.0 C615.7 515.2 628.7 525.8 633.0 530.0 L634.0 528.0 L634.0 528.0 C630.3 523.3 619.8 510.2 612.0 500.0 C604.2 489.8 595.3 479.0 587.0 467.0 C578.7 455.0 570.0 441.3 562.0 428.0 C554.0 414.7 546.0 400.0 539.0 387.0 C532.0 374.0 525.7 361.3 520.0 350.0 C514.3 338.7 507.5 324.2 505.0 319.0 Z" fill="#4a4a4a" /><line x1="291" y1="143.9" x2="756" y2="437.5" stroke="#505050" stroke-width="1.2" stroke-dasharray="2 2" opacity="0.8"/><line x1="235" y1="203.0" x2="740" y2="528.4" stroke="#000" stroke-width="1" stroke-dasharray="1.2 5 1.2 8 1.2 4 1.2 12" opacity="0.5"/><line x1="225" y1="239.5" x2="700" y2="545.6" stroke="#000" stroke-width="1" stroke-dasharray="1.2 5 1.2 8 1.2 4 1.2 12" opacity="0.5"/></g><path d="M495.0 308.0 C498.2 315.0 507.7 336.3 514.0 350.0 C520.3 363.7 525.8 377.0 533.0 390.0 C540.2 403.0 548.5 414.8 557.0 428.0 C565.5 441.2 575.2 455.8 584.0 469.0 C592.8 482.2 601.8 496.8 610.0 507.0 C618.2 517.2 629.2 526.2 633.0 530.0" fill="none" stroke="#22cc22" stroke-width="1.1"/><polyline points="272.7,291.0 318.0,251.5 362.0,215.0 374.0,210.4 393.0,210.4 404.4,212.6 429.8,229.6 461.0,251.0 477.0,273.0 490.0,295.0 495.0,308.0" fill="none" stroke="#22cc22" stroke-width="1.1" stroke-linejoin="round"/><path d="M272.0 298.5 C281.7 298.8 303.7 299.0 330.0 300.0 C356.3 301.0 402.5 303.2 430.0 304.5 C457.5 305.8 476.2 305.8 495.0 308.0 C513.8 310.2 528.7 314.0 543.0 317.7 C557.3 321.4 569.9 325.6 580.6 330.0 C591.3 334.4 596.6 338.2 607.0 344.0 C617.4 349.8 632.2 358.0 643.0 365.0 C653.8 372.0 663.8 377.2 672.0 386.0 C680.2 394.8 687.1 406.3 692.0 418.0 C696.9 429.7 700.5 444.3 701.5 456.0 C702.5 467.7 700.9 478.7 698.0 488.0 C695.1 497.3 690.0 505.3 684.0 512.0 C678.0 518.7 668.5 524.7 662.0 528.0 C655.5 531.3 649.8 531.7 645.0 532.0 C640.2 532.3 635.0 530.3 633.0 530.0" fill="none" stroke="#22cc22" stroke-width="1.1"/><polyline points="505.0,213.0 500.0,270.0 495.0,308.0 491.0,345.0" fill="none" stroke="#d02020" stroke-width="1" stroke-dasharray="9 5"/><polyline points="490.5,336.0 490.5,350.0 512.0,366.0" fill="none" stroke="#c82020" stroke-width="1" /><polyline points="490.5,350.0 501.0,353.0 498.0,344.0 506.0,336.0" fill="none" stroke="#c82020" stroke-width="1" /><text x="508" y="350" font-size="9" fill="#fff" font-family="Liberation Sans">y</text><text x="491" y="365" font-size="8" font-weight="bold" fill="#fff" font-family="Liberation Sans">0</text><text x="514" y="379" font-size="8" fill="#fff" font-family="Liberation Sans">x</text><defs><linearGradient id="tg" x1="0" y1="0" x2="1" y2="0"><stop offset="0" stop-color="#8a2020"/><stop offset="0.35" stop-color="#b84040"/><stop offset="0.7" stop-color="#a83030"/><stop offset="1" stop-color="#7a1a1a"/></linearGradient><linearGradient id="tb" x1="0" y1="0" x2="1" y2="0"><stop offset="0" stop-color="#2a2a70"/><stop offset="0.4" stop-color="#4a4aa8"/><stop offset="1" stop-color="#2a2a80"/></linearGradient></defs><path d="M509 109 L528 109 L516 205 Q513 214 505 213 Q498 211 499 203 Z" fill="url(#tg)"/><path d="M509 109 L528 109 L526 124 L507 122 Z" fill="url(#tb)"/><line x1="513.5" y1="124" x2="503" y2="210" stroke="#300" stroke-width="1" stroke-dasharray="3 4" opacity="0.8"/><line x1="523.5" y1="124" x2="516" y2="198" stroke="#300" stroke-width="1" stroke-dasharray="3 5" opacity="0.7"/></g></svg>
</body></html>
